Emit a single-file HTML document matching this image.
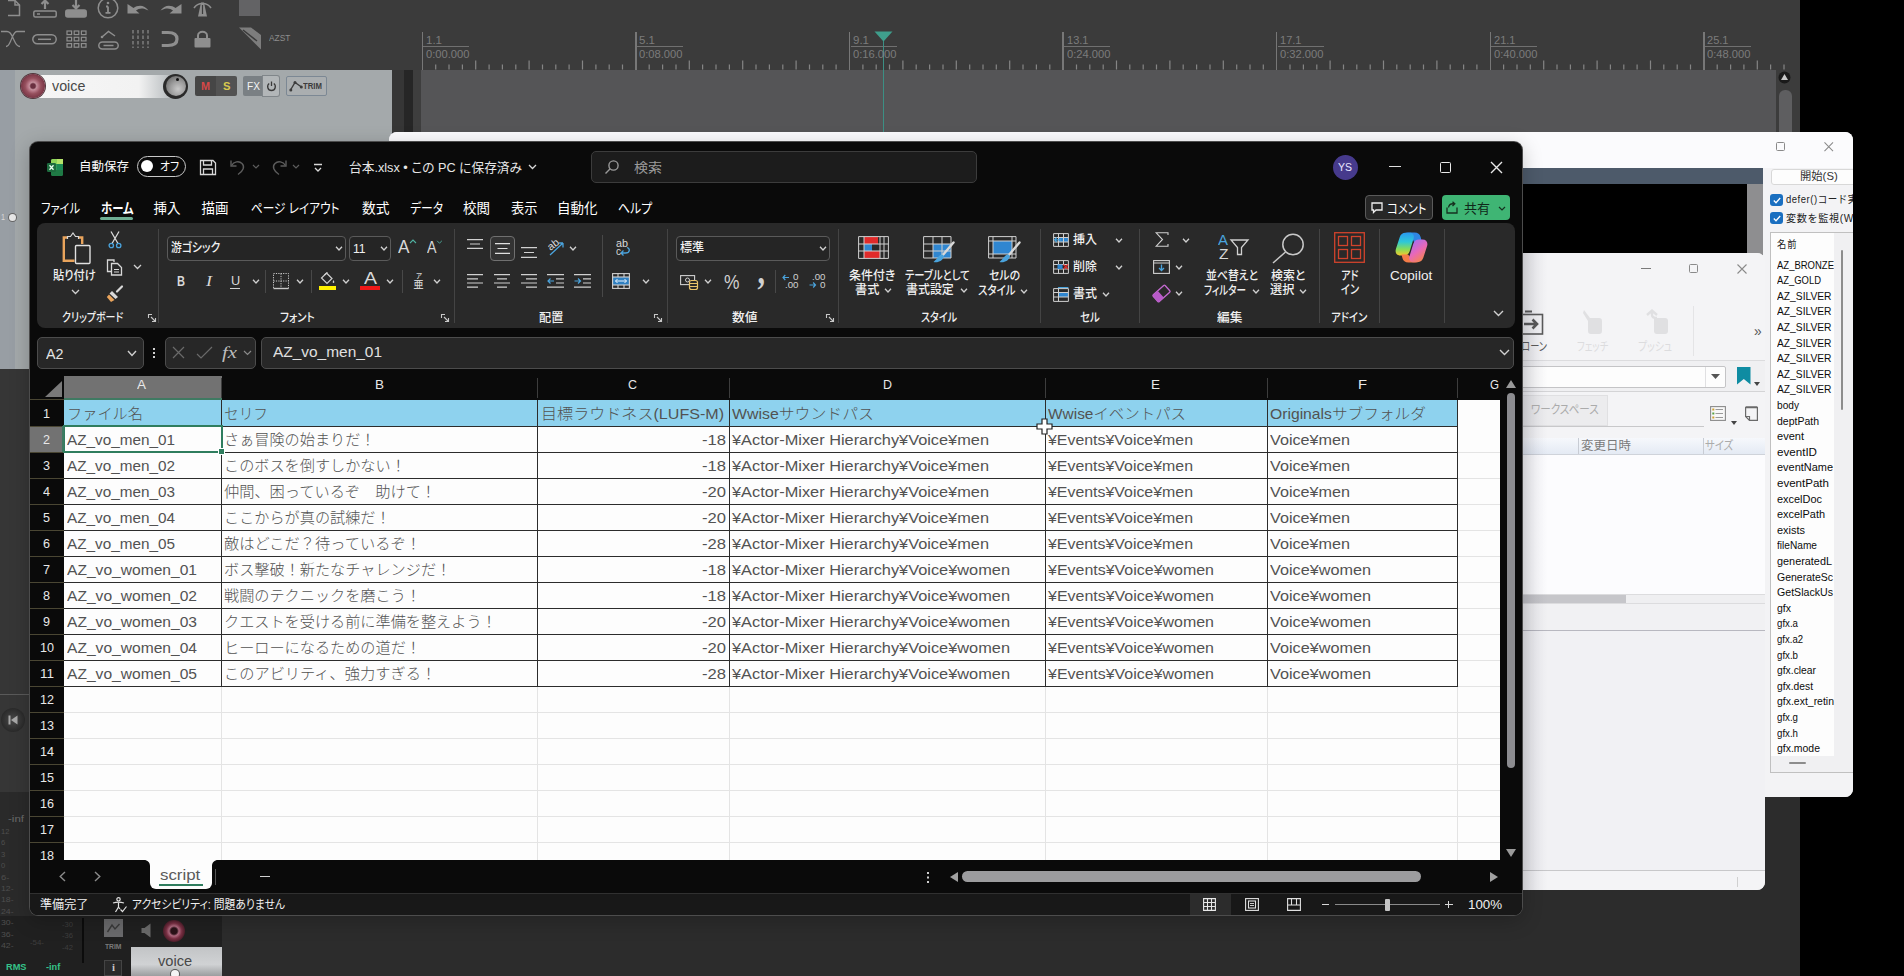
<!DOCTYPE html>
<html lang="ja">
<head>
<meta charset="utf-8">
<title>台本.xlsx</title>
<style>
*{box-sizing:border-box;margin:0;padding:0}
html,body{width:1904px;height:976px;overflow:hidden;background:#2c2c2c}
body{position:relative;font-family:"Liberation Sans","Noto Sans CJK JP",sans-serif;font-size:12px;color:#ddd}
.a{position:absolute}
.t{position:absolute;white-space:pre;line-height:1}
svg{position:absolute;overflow:visible}
.o{position:absolute;left:0;top:0}
/* DAW */
#daw-top{left:0;top:0;width:420px;height:69px;background:#3b3b3b}
#ruler{left:420px;top:0;width:1380px;height:69px;background:#404040}
#arr{left:420px;top:69px;width:1380px;height:727px;background:#565656}
#tcp{left:14px;top:70px;width:378px;height:299px;background:#a3a8aa}
#tcpl{left:0;top:70px;width:14px;height:299px;background:#90969a}
#gap{left:392px;top:69px;width:28px;height:300px;background:#3a3a3a}
#rblack{left:1800px;top:0;width:104px;height:976px;background:#000}
/* windows */
#ide{left:389px;top:132px;width:1464px;height:665px;background:#f6f6f8;border-radius:8px;overflow:hidden}
#ide>.o{left:-389px;top:-132px}
#git{left:1500px;top:253px;width:265px;height:637px;background:#f3f3f5;border-radius:0 8px 8px 0;overflow:hidden}
#git>.o{left:-1500px;top:-253px}
/* excel */
#xl{left:30px;top:142px;width:1492px;height:773px;background:#0a0a0a;border-radius:8px;overflow:hidden}
#xl>.o{left:-30px;top:-142px}
#xlb{left:29px;top:141px;width:1494px;height:775px;border-radius:9px;background:#4c4c4c;box-shadow:0 5px 20px rgba(0,0,0,.22)}
</style>
</head>
<body>
<!-- ===== DAW background ===== -->
<div class="a" id="daw-top"></div>
<div class="a" id="ruler"></div>
<div class="a" id="arr"></div>
<div class="a" id="gap"></div>
<div class="a" id="tcpl"></div>
<div class="a" id="tcp"></div>
<div class="a" id="rblack"></div>
<div class="a" style="left:0;top:0;width:1800px;height:69.5px;background:#3b3b3b"></div>
<div class="a" style="left:421px;top:69.5px;width:1355px;height:730px;background:#555557"></div>
<div class="a" style="left:1776px;top:69.5px;width:24px;height:730px;background:#3c3c3c"></div>
<div class="a" style="left:392px;top:69.5px;width:12px;height:300px;background:#363636"></div><div class="a" style="left:404px;top:69.5px;width:9px;height:300px;background:#262626"></div>
<div class="a" style="left:413px;top:69.5px;width:8px;height:300px;background:#3e3e3e"></div>
<div class="a" style="left:0;top:69.5px;width:15px;height:300px;background:#989ea4"></div>
<div class="a" style="left:15px;top:69.5px;width:377px;height:300px;background:#a4a9ab"></div>
<div class="a" style="left:0;top:369px;width:421px;height:607px;background:#363636"></div>
<div class="a" style="left:0;top:694px;width:30px;height:1px;background:#5a5a5a"></div>
<div class="a" style="left:0;top:792px;width:421px;height:184px;background:#2a2a2a"></div>
<div class="a" style="left:0;top:916px;width:222px;height:60px;background:#202020"></div>
<div class="a" style="left:222px;top:796px;width:1578px;height:180px;background:#2c2c2c"></div>
<div class="a" style="left:421.6px;top:32px;width:1.4px;height:37.5px;background:#777"></div>
<div class="a" style="left:423.3px;top:46px;width:46px;height:1px;background:#707070"></div>
<div class="a" style="left:635.2px;top:32px;width:1.4px;height:37.5px;background:#777"></div>
<div class="a" style="left:636.9px;top:46px;width:46px;height:1px;background:#707070"></div>
<div class="a" style="left:848.8px;top:32px;width:1.4px;height:37.5px;background:#777"></div>
<div class="a" style="left:850.5px;top:46px;width:46px;height:1px;background:#707070"></div>
<div class="a" style="left:1062.4px;top:32px;width:1.4px;height:37.5px;background:#777"></div>
<div class="a" style="left:1064.1px;top:46px;width:46px;height:1px;background:#707070"></div>
<div class="a" style="left:1276.0px;top:32px;width:1.4px;height:37.5px;background:#777"></div>
<div class="a" style="left:1277.7px;top:46px;width:46px;height:1px;background:#707070"></div>
<div class="a" style="left:1489.6px;top:32px;width:1.4px;height:37.5px;background:#777"></div>
<div class="a" style="left:1491.3px;top:46px;width:46px;height:1px;background:#707070"></div>
<div class="a" style="left:1703.2px;top:32px;width:1.4px;height:37.5px;background:#777"></div>
<div class="a" style="left:1704.9px;top:46px;width:46px;height:1px;background:#707070"></div>
<svg style="left:0;top:0" width="1800" height="70"><path d="M435.7 64.5V69.5M449.0 64.5V69.5M462.4 64.5V69.5M475.7 60.5V69.5M489.1 64.5V69.5M502.4 64.5V69.5M515.8 64.5V69.5M529.1 60.5V69.5M542.5 64.5V69.5M555.8 64.5V69.5M569.1 64.5V69.5M582.5 60.5V69.5M595.9 64.5V69.5M609.2 64.5V69.5M622.5 64.5V69.5M649.2 64.5V69.5M662.6 64.5V69.5M676.0 64.5V69.5M689.3 60.5V69.5M702.6 64.5V69.5M716.0 64.5V69.5M729.4 64.5V69.5M742.7 60.5V69.5M756.0 64.5V69.5M769.4 64.5V69.5M782.8 64.5V69.5M796.1 60.5V69.5M809.5 64.5V69.5M822.8 64.5V69.5M836.1 64.5V69.5M862.9 64.5V69.5M876.2 64.5V69.5M889.5 64.5V69.5M902.9 60.5V69.5M916.2 64.5V69.5M929.6 64.5V69.5M943.0 64.5V69.5M956.3 60.5V69.5M969.7 64.5V69.5M983.0 64.5V69.5M996.3 64.5V69.5M1009.7 60.5V69.5M1023.0 64.5V69.5M1036.4 64.5V69.5M1049.8 64.5V69.5M1076.5 64.5V69.5M1089.8 64.5V69.5M1103.2 64.5V69.5M1116.5 60.5V69.5M1129.8 64.5V69.5M1143.2 64.5V69.5M1156.5 64.5V69.5M1169.9 60.5V69.5M1183.2 64.5V69.5M1196.6 64.5V69.5M1210.0 64.5V69.5M1223.3 60.5V69.5M1236.7 64.5V69.5M1250.0 64.5V69.5M1263.3 64.5V69.5M1290.0 64.5V69.5M1303.4 64.5V69.5M1316.8 64.5V69.5M1330.1 60.5V69.5M1343.5 64.5V69.5M1356.8 64.5V69.5M1370.2 64.5V69.5M1383.5 60.5V69.5M1396.8 64.5V69.5M1410.2 64.5V69.5M1423.5 64.5V69.5M1436.9 60.5V69.5M1450.2 64.5V69.5M1463.6 64.5V69.5M1476.9 64.5V69.5M1503.6 64.5V69.5M1517.0 64.5V69.5M1530.3 64.5V69.5M1543.7 60.5V69.5M1557.0 64.5V69.5M1570.4 64.5V69.5M1583.8 64.5V69.5M1597.1 60.5V69.5M1610.4 64.5V69.5M1623.8 64.5V69.5M1637.1 64.5V69.5M1650.5 60.5V69.5M1663.8 64.5V69.5M1677.2 64.5V69.5M1690.5 64.5V69.5M1717.2 64.5V69.5M1730.6 64.5V69.5M1743.9 64.5V69.5M1757.3 60.5V69.5M1770.6 64.5V69.5M1784.0 64.5V69.5" stroke="#858585" stroke-width="1.2" fill="none"/></svg>
<svg style="left:874px;top:31px" width="19" height="11" viewBox="0 0 19 11"><path d="M0.5 0.5H18.5L9.5 10.5Z" fill="#3f9e8c"/></svg>
<div class="a" style="left:882.6px;top:41px;width:1.4px;height:92px;background:#3c8f84"></div>
<div class="a" style="left:1779px;top:90px;width:12.5px;height:60px;background:#5e5e60;border-radius:6px 6px 0 0"></div>
<svg style="left:1778px;top:71px" width="13" height="13" viewBox="0 0 13 13"><circle cx="6.5" cy="6.5" r="6" fill="#1a1a1a"/><path d="M6.5 3L10 9H3Z" fill="#c8c8c8"/></svg>
<svg style="left:6px;top:0px" width="16" height="17" viewBox="0 0 16 17" fill="none" stroke="#8e8e8e" stroke-width="1.5" ><path d="M2 0.5H9L13.5 5V15.5H2"/><path d="M9 0.5V5H13.5"/></svg>
<svg style="left:33px;top:0px" width="24" height="18" viewBox="0 0 24 18" fill="none" stroke="#8e8e8e" stroke-width="1.5" ><rect x="0.8" y="11" width="22.4" height="6" rx="1.5"/><path d="M12 9V1M8.5 4L12 0.5L15.5 4" stroke-width="2.2"/><path d="M4 14H7" /></svg>
<svg style="left:65px;top:0px" width="22" height="18" viewBox="0 0 22 18" fill="none" stroke="#8e8e8e" stroke-width="1.5" ><rect x="0.8" y="10" width="20.4" height="7" rx="2" fill="#8e8e8e"/><path d="M11 0V8M7.5 5L11 8.5L14.5 5" stroke-width="2.2"/></svg>
<svg style="left:97px;top:-3px" width="22" height="22" viewBox="0 0 22 22" fill="none" stroke="#8e8e8e" stroke-width="1.5" ><circle cx="11" cy="11" r="9.8"/><path d="M11 9.5V15.5M8.5 15.8H13.5M9 9.5H11" stroke-width="1.8"/><circle cx="11" cy="6" r="1.3" fill="#8e8e8e" stroke="none"/></svg>
<svg style="left:127px;top:3px" width="22" height="11" viewBox="0 0 22 11" fill="#8e8e8e"><path d="M0.5 10.5V1L6.5 5C11 1.5 17.5 1.5 21.5 7.5C16 4.5 12 5 9 7.5L12.5 10.5Z"/></svg>
<svg style="left:160px;top:3px" width="22" height="11" viewBox="0 0 22 11" fill="#8e8e8e"><path d="M21.5 10.5V1L15.5 5C11 1.5 4.5 1.5 0.5 7.5C6 4.5 10 5 13 7.5L9.5 10.5Z"/></svg>
<svg style="left:193px;top:0px" width="19" height="18" viewBox="0 0 19 18" fill="none" stroke="#8e8e8e" stroke-width="1.5" ><path d="M5 16.5L8 2.5H11L14 16.5Z" fill="#8e8e8e" stroke="none"/><path d="M1 8C5 2 14 2 18 8" stroke-width="1.6"/><path d="M9.5 5V14" stroke="#3b3b3b" stroke-width="1.2"/></svg>
<div class="a" style="left:239px;top:0;width:21px;height:16px;background:#636365"></div>
<svg style="left:1px;top:30px" width="25" height="18" viewBox="0 0 25 18" fill="none" stroke="#8e8e8e" stroke-width="1.5" ><path d="M0 1.5H6C10 1.5 11 6 12.5 9C14 12 15 16.5 19 16.5M24 1.5H16C13 1.5 12 6 10.5 9C9 12 8 16.5 5 16.5" stroke-width="1.3"/></svg>
<svg style="left:32px;top:34px" width="25" height="11" viewBox="0 0 25 11" fill="none" stroke="#8e8e8e" stroke-width="1.5" ><rect x="0.8" y="0.8" width="23.4" height="9" rx="4.5"/><path d="M6 5.3H19"/></svg>
<svg style="left:66px;top:30px" width="21" height="18" viewBox="0 0 21 18" fill="none" stroke="#8e8e8e" stroke-width="1.5" ><rect x="1.0" y="1.0" width="4.6" height="3.6" stroke-width="1.2"/><rect x="8.2" y="1.0" width="4.6" height="3.6" stroke-width="1.2"/><rect x="15.4" y="1.0" width="4.6" height="3.6" stroke-width="1.2"/><rect x="1.0" y="7.3" width="4.6" height="3.6" stroke-width="1.2"/><rect x="8.2" y="7.3" width="4.6" height="3.6" stroke-width="1.2"/><rect x="15.4" y="7.3" width="4.6" height="3.6" stroke-width="1.2"/><rect x="1.0" y="13.6" width="4.6" height="3.6" stroke-width="1.2"/><rect x="8.2" y="13.6" width="4.6" height="3.6" stroke-width="1.2"/><rect x="15.4" y="13.6" width="4.6" height="3.6" stroke-width="1.2"/></svg>
<svg style="left:98px;top:30px" width="21" height="20" viewBox="0 0 21 20" fill="none" stroke="#8e8e8e" stroke-width="1.5" ><path d="M4 7L10.5 1.5L17 6"/><circle cx="4" cy="7" r="1.3" fill="#8e8e8e" stroke="none"/><rect x="0.8" y="12" width="19.4" height="7" rx="3.5"/><path d="M5.5 15.5H15.5"/></svg>
<svg style="left:131px;top:30px" width="18" height="18" viewBox="0 0 18 18" fill="none" stroke="#8e8e8e" stroke-width="1.5" ><path d="M2 0V18M7 0V18M12 0V18M17 0V18" stroke-dasharray="3.5 2" stroke-width="1.2"/></svg>
<svg style="left:160px;top:30px" width="20" height="18" viewBox="0 0 20 18" fill="none" stroke="#8e8e8e" stroke-width="1.5" ><path d="M1 2.5H8C14 2.5 17 5 17 9C17 13 14 15.5 8 15.5H1" stroke-width="3.2"/><path d="M1 0.5V4.5M1 13.5V17.5" stroke="#3b3b3b" stroke-width="1.5"/></svg>
<svg style="left:194px;top:30px" width="17" height="18" viewBox="0 0 17 18" fill="none" stroke="#8e8e8e" stroke-width="1.5" ><rect x="0.5" y="8" width="16" height="9.5" rx="1" fill="#8e8e8e" stroke="none"/><path d="M4 8V5.5C4 0.5 13 0.5 13 5.5V8" stroke-width="2"/></svg>
<svg style="left:238px;top:27px" width="24" height="23" viewBox="0 0 24 23" fill="none" stroke="#8e8e8e" stroke-width="1.5" ><path d="M1 0.5H13L23 8V22.5Z" fill="#8e8e8e" stroke="none" opacity=".8"/><path d="M5 3L19 14" stroke="#3b3b3b" stroke-width="1.5"/></svg>
<div class="a" style="left:38px;top:74.5px;width:140px;height:23px;background:linear-gradient(90deg,#f6f6f6 0,#f2f2f2 72%,#c4c8ca 90%,#a4a9ab 100%)"></div>
<div class="a" style="left:20.5px;top:74px;width:24px;height:24px;border-radius:12px;background:radial-gradient(circle,#6a3040 0,#6a3040 13%,#c4909c 22%,#b87888 30%,#96505e 46%,#7a3646 70%,#5e2634 100%);box-shadow:0 0 0 1px #50343a"></div>
<div class="a" style="left:163px;top:73.5px;width:25px;height:25px;border-radius:12.5px;background:#2a2a2a"></div><div class="a" style="left:165.5px;top:76px;width:20px;height:20px;border-radius:10px;background:radial-gradient(circle at 60% 65%,#c8c8c8 0,#a0a0a0 40%,#707070 80%,#5a5a5a 100%)"></div>
<div class="a" style="left:176px;top:77.5px;width:3px;height:3px;border-radius:2px;background:#111"></div>
<div class="a" style="left:195px;top:76px;width:21px;height:20px;background:#464646;border-radius:2px 0 0 2px"></div>
<div class="a" style="left:216px;top:76px;width:20.5px;height:20px;background:#525252;border-radius:0 2px 2px 0"></div>
<div class="a" style="left:243px;top:76px;width:20px;height:20px;background:#7a8084;border-radius:2px 0 0 2px"></div>
<div class="a" style="left:263px;top:76px;width:15.5px;height:20px;background:#b2b6b8;border-radius:0 2px 2px 0;box-shadow:0 0 0 1px #80868a"></div>
<svg style="left:265.5px;top:80.5px" width="11" height="11" viewBox="0 0 11 11" fill="none" stroke="#3a3a3a" stroke-width="1.3"><path d="M3.2 2.5C0.5 4.5 1.5 9.5 5.5 9.5C9.5 9.5 10.5 4.5 7.8 2.5M5.5 0.5V5"/></svg>
<div class="a" style="left:285.5px;top:76px;width:41px;height:20px;background:#aaaeb0;border:1px solid #7c8894;border-radius:2px"></div>
<svg style="left:289px;top:80px" width="14" height="12" viewBox="0 0 14 12" fill="none" stroke="#3c3c3c" stroke-width="1.4"><path d="M1.5 10L6 2.5L12.5 7"/><circle cx="1.8" cy="10" r="1.5" fill="#3c3c3c" stroke="none"/><circle cx="6" cy="2.5" r="1.5" fill="#3c3c3c" stroke="none"/><circle cx="12.3" cy="7" r="1.5" fill="#3c3c3c" stroke="none"/></svg>
<div class="a" style="left:9px;top:213.5px;width:7px;height:7px;border-radius:4px;background:#e8e8e8;box-shadow:0 0 0 1px #666"></div>
<div class="a" style="left:1px;top:708px;width:24px;height:24px;border-radius:12px;background:radial-gradient(circle,#4a4a4a 0,#2a2a2a 70%,#1a1a1a 100%)"></div>
<svg style="left:8px;top:715px" width="10" height="10" viewBox="0 0 10 10" fill="#a8a8a8"><rect x="0.5" y="0.5" width="2" height="9"/><path d="M9.5 0.5V9.5L3 5Z"/></svg>
<div class="a" style="left:82px;top:918px;width:1.6px;height:45px;background:#0c0c0c"></div>
<div class="a" style="left:104px;top:919px;width:19px;height:18px;background:#6a6a6c"></div>
<svg style="left:106px;top:922px" width="15" height="12" viewBox="0 0 15 12" fill="none" stroke="#3a3a3a" stroke-width="1.4"><path d="M1.5 10L6 3L9 7L13.5 2"/></svg>
<div class="a" style="left:104px;top:960px;width:18px;height:16px;background:#2a2a2a;border:1px solid #444"></div>
<svg style="left:141px;top:923px" width="10" height="15" viewBox="0 0 10 15"><path d="M9.5 0.5V14.5L3.5 10H0.5V5H3.5Z" fill="#6a6a6a"/></svg>
<div class="a" style="left:163px;top:920px;width:22px;height:22px;border-radius:11px;background:radial-gradient(circle,#2a1218 0,#2a1218 20%,#b06a80 32%,#7a3044 50%,#4a1c28 72%,#2a2022 100%)"></div>
<div class="a" style="left:130.5px;top:947px;width:91.5px;height:29px;background:linear-gradient(#c2c4c6 0,#d0d2d4 60%,#9c9ea0 100%)"></div>
<div class="a" style="left:171px;top:970px;width:8px;height:8px;border-radius:4px;background:#f4f4f4;box-shadow:0 0 0 1px #555"></div>
<span class="t" style="left:425.8px;top:35.0px;font-size:10.5px;color:#7c7c7c;transform:scaleX(1.0952);transform-origin:0 50%;">1.1</span>
<span class="t" style="left:425.8px;top:48.8px;font-size:10.5px;color:#7c7c7c;transform:scaleX(1.0642);transform-origin:0 50%;">0:00.000</span>
<span class="t" style="left:639.4px;top:35.0px;font-size:10.5px;color:#7c7c7c;transform:scaleX(1.0952);transform-origin:0 50%;">5.1</span>
<span class="t" style="left:639.4px;top:48.8px;font-size:10.5px;color:#7c7c7c;transform:scaleX(1.0642);transform-origin:0 50%;">0:08.000</span>
<span class="t" style="left:853.0px;top:35.0px;font-size:10.5px;color:#7c7c7c;transform:scaleX(1.0952);transform-origin:0 50%;">9.1</span>
<span class="t" style="left:853.0px;top:48.8px;font-size:10.5px;color:#7c7c7c;transform:scaleX(1.0642);transform-origin:0 50%;">0:16.000</span>
<span class="t" style="left:1066.6px;top:35.0px;font-size:10.5px;color:#7c7c7c;transform:scaleX(1.0520);transform-origin:0 50%;">13.1</span>
<span class="t" style="left:1066.6px;top:48.8px;font-size:10.5px;color:#7c7c7c;transform:scaleX(1.0642);transform-origin:0 50%;">0:24.000</span>
<span class="t" style="left:1280.2px;top:35.0px;font-size:10.5px;color:#7c7c7c;transform:scaleX(1.0520);transform-origin:0 50%;">17.1</span>
<span class="t" style="left:1280.2px;top:48.8px;font-size:10.5px;color:#7c7c7c;transform:scaleX(1.0642);transform-origin:0 50%;">0:32.000</span>
<span class="t" style="left:1493.8px;top:35.0px;font-size:10.5px;color:#7c7c7c;transform:scaleX(1.0520);transform-origin:0 50%;">21.1</span>
<span class="t" style="left:1493.8px;top:48.8px;font-size:10.5px;color:#7c7c7c;transform:scaleX(1.0642);transform-origin:0 50%;">0:40.000</span>
<span class="t" style="left:1707.4px;top:35.0px;font-size:10.5px;color:#7c7c7c;transform:scaleX(1.0520);transform-origin:0 50%;">25.1</span>
<span class="t" style="left:1707.4px;top:48.8px;font-size:10.5px;color:#7c7c7c;transform:scaleX(1.0642);transform-origin:0 50%;">0:48.000</span>
<span class="t" style="left:269.4px;top:34.3px;font-size:9px;color:#8e8e8e;transform:scaleX(0.9255);transform-origin:0 50%;">AZST</span>
<span class="t" style="left:52.4px;top:78.0px;font-size:15px;color:#484848;transform:scaleX(0.9534);transform-origin:0 50%;">voice</span>
<span class="t" style="left:201.0px;top:80.8px;font-size:11px;color:#d64848;font-weight:700;transform:scaleX(0.9813);transform-origin:0 50%;">M</span>
<span class="t" style="left:222.5px;top:80.8px;font-size:11px;color:#d8c84e;font-weight:700;transform:scaleX(1.0213);transform-origin:0 50%;">S</span>
<span class="t" style="left:246.5px;top:80.8px;font-size:11px;color:#f4f4f4;transform:scaleX(0.9244);transform-origin:0 50%;">FX</span>
<span class="t" style="left:303.0px;top:81.8px;font-size:9px;color:#3c3c3c;font-weight:700;transform:scaleX(0.8636);transform-origin:0 50%;">TRIM</span>
<span class="t" style="left:1.0px;top:212.5px;font-size:9px;color:#d8d8d8;transform:scaleX(0.7975);transform-origin:0 50%;">1</span>
<span class="t" style="left:157.7px;top:952.5px;font-size:15px;color:#484848;transform:scaleX(0.9763);transform-origin:0 50%;">voice</span>
<span class="t" style="left:105.0px;top:942.5px;font-size:8px;color:#7a7a7a;font-weight:700;transform:scaleX(0.8435);transform-origin:0 50%;">TRIM</span>
<span class="t" style="left:111.5px;top:962.0px;font-size:11px;color:#c8c8c8;font-weight:700;font-family:'Liberation Serif',serif;transform:scaleX(0.9796);transform-origin:0 50%;">i</span>
<span class="t" style="left:5.5px;top:962.2px;font-size:9.5px;color:#35c48a;font-weight:700;transform:scaleX(0.9704);transform-origin:0 50%;">RMS</span>
<span class="t" style="left:45.7px;top:962.2px;font-size:9.5px;color:#35c48a;font-weight:700;transform:scaleX(0.9674);transform-origin:0 50%;">-inf</span>
<span class="t" style="left:8.0px;top:815.0px;font-size:9px;color:#6a6a6a;transform:scaleX(1.2784);transform-origin:0 50%;">-inf</span>
<span class="t" style="left:1.0px;top:828.0px;font-size:8px;color:#4e4e4e;transform:scaleX(0.9432);transform-origin:0 50%;">12</span>
<span class="t" style="left:1.0px;top:839.4px;font-size:8px;color:#4e4e4e;transform:scaleX(0.9432);transform-origin:0 50%;">6</span>
<span class="t" style="left:1.0px;top:850.8px;font-size:8px;color:#4e4e4e;transform:scaleX(0.9432);transform-origin:0 50%;">3</span>
<span class="t" style="left:1.0px;top:862.2px;font-size:8px;color:#4e4e4e;transform:scaleX(0.9432);transform-origin:0 50%;">0</span>
<span class="t" style="left:1.0px;top:873.6px;font-size:8px;color:#4e4e4e;transform:scaleX(1.1789);transform-origin:0 50%;">6-</span>
<span class="t" style="left:1.0px;top:885.0px;font-size:8px;color:#4e4e4e;transform:scaleX(1.0897);transform-origin:0 50%;">12-</span>
<span class="t" style="left:1.0px;top:896.4px;font-size:8px;color:#4e4e4e;transform:scaleX(1.0897);transform-origin:0 50%;">18-</span>
<span class="t" style="left:1.0px;top:907.8px;font-size:8px;color:#4e4e4e;transform:scaleX(1.0897);transform-origin:0 50%;">24-</span>
<span class="t" style="left:1.0px;top:919.2px;font-size:8px;color:#4e4e4e;transform:scaleX(1.0897);transform-origin:0 50%;">30-</span>
<span class="t" style="left:1.0px;top:930.6px;font-size:8px;color:#4e4e4e;transform:scaleX(1.0897);transform-origin:0 50%;">36-</span>
<span class="t" style="left:1.0px;top:942.0px;font-size:8px;color:#4e4e4e;transform:scaleX(1.0897);transform-origin:0 50%;">42-</span>
<span class="t" style="left:62.0px;top:921.0px;font-size:8px;color:#3e3e3e;transform:scaleX(0.9514);transform-origin:0 50%;">-30</span>
<span class="t" style="left:62.0px;top:932.4px;font-size:8px;color:#3e3e3e;transform:scaleX(0.9514);transform-origin:0 50%;">-36</span>
<span class="t" style="left:62.0px;top:943.8px;font-size:8px;color:#3e3e3e;transform:scaleX(0.9514);transform-origin:0 50%;">-42</span>
<span class="t" style="left:30.0px;top:939.0px;font-size:8px;color:#3e3e3e;transform:scaleX(0.9835);transform-origin:0 50%;">-54-</span>
<!-- ===== IDE window (behind) ===== -->
<div class="a" id="ide"><div class="o">
<!-- IDE window contents -->
<div class="a" style="left:389px;top:132px;width:1464px;height:36px;background:#fbfbfd"></div>
<svg style="left:399px;top:137px" width="12" height="12" viewBox="0 0 12 12" fill="none"><path d="M1.5 11C1.5 5 10.5 5 10.5 11" stroke="#2a86c8" stroke-width="2"/></svg>
<div class="a" style="left:1776px;top:142px;width:9px;height:9px;border:1px solid #8a8a8a;border-radius:1.5px"></div>
<svg style="left:1824px;top:142px" width="9.5" height="9.5" viewBox="0 0 10 10" stroke="#8a8a8a" stroke-width="1.1"><path d="M0.5 0.5L9.5 9.5M9.5 0.5L0.5 9.5"/></svg>
<div class="a" style="left:389px;top:167.5px;width:1374px;height:16.5px;background:#4d5a6a"></div>
<div class="a" style="left:389px;top:184px;width:1358px;height:600px;background:#000"></div>
<div class="a" style="left:1746.5px;top:184px;width:16.5px;height:600px;background:#8e8e90"></div>
<div class="a" style="left:1763px;top:167.5px;width:90px;height:630px;background:#f3f3f5"></div>
<!-- start button -->
<div class="a" style="left:1771px;top:169px;width:90px;height:16px;background:#fdfdfd;border:1px solid #d8d8d8;border-radius:3px"></div>
<!-- checkboxes -->
<div class="a" style="left:1770.3px;top:193.6px;width:12.6px;height:12.2px;background:#1a6fc0;border-radius:3px"></div>
<svg style="left:1772.5px;top:196.5px" width="8" height="7" viewBox="0 0 8 7" fill="none" stroke="#fff" stroke-width="1.3"><path d="M0.8 3.5L3 5.8L7.2 1"/></svg>
<div class="a" style="left:1770.3px;top:212.1px;width:12.6px;height:12.2px;background:#1a6fc0;border-radius:3px"></div>
<svg style="left:1772.5px;top:215px" width="8" height="7" viewBox="0 0 8 7" fill="none" stroke="#fff" stroke-width="1.3"><path d="M0.8 3.5L3 5.8L7.2 1"/></svg>
<!-- list box -->
<div class="a" style="left:1769.5px;top:231.5px;width:84px;height:541px;background:#fdfdfd;border:1px solid #c0c0c0"></div>
<div class="a" style="left:1770.5px;top:756px;width:64px;height:15.5px;background:#f0f0f2"></div>
<div class="a" style="left:1789px;top:761.5px;width:17px;height:2px;background:#8c8c8c;border-radius:1px"></div>

<span class="t" style="left:1799.8px;top:171.3px;font-size:11px;color:#333;transform:scaleX(1.0280);transform-origin:0 50%;">開始(S)</span>
<span class="t" style="left:1786.2px;top:194.4px;font-size:10.5px;color:#222;letter-spacing:0.6px;transform:scaleX(0.9025);transform-origin:0 50%;">defer()コード実行</span>
<span class="t" style="left:1786.2px;top:212.9px;font-size:10.5px;color:#222;letter-spacing:0.6px;transform:scaleX(0.9674);transform-origin:0 50%;">変数を監視(W)</span>
<span class="t" style="left:1777.4px;top:238.8px;font-size:10.5px;color:#222;letter-spacing:1px;transform:scaleX(0.8826);transform-origin:0 50%;">名前</span>
<span class="t" style="left:1777.4px;top:259.6px;font-size:10.5px;color:#0c0c0c;transform:scaleX(0.9045);transform-origin:0 50%;">AZ_BRONZE</span>
<span class="t" style="left:1777.4px;top:275.2px;font-size:10.5px;color:#0c0c0c;transform:scaleX(0.8977);transform-origin:0 50%;">AZ_GOLD</span>
<span class="t" style="left:1777.4px;top:290.8px;font-size:10.5px;color:#0c0c0c;transform:scaleX(0.9762);transform-origin:0 50%;">AZ_SILVER</span>
<span class="t" style="left:1777.4px;top:306.4px;font-size:10.5px;color:#0c0c0c;transform:scaleX(0.9762);transform-origin:0 50%;">AZ_SILVER</span>
<span class="t" style="left:1777.4px;top:321.9px;font-size:10.5px;color:#0c0c0c;transform:scaleX(0.9762);transform-origin:0 50%;">AZ_SILVER</span>
<span class="t" style="left:1777.4px;top:337.6px;font-size:10.5px;color:#0c0c0c;transform:scaleX(0.9762);transform-origin:0 50%;">AZ_SILVER</span>
<span class="t" style="left:1777.4px;top:353.1px;font-size:10.5px;color:#0c0c0c;transform:scaleX(0.9762);transform-origin:0 50%;">AZ_SILVER</span>
<span class="t" style="left:1777.4px;top:368.8px;font-size:10.5px;color:#0c0c0c;transform:scaleX(0.9762);transform-origin:0 50%;">AZ_SILVER</span>
<span class="t" style="left:1777.4px;top:384.4px;font-size:10.5px;color:#0c0c0c;transform:scaleX(0.9762);transform-origin:0 50%;">AZ_SILVER</span>
<span class="t" style="left:1777.4px;top:400.0px;font-size:10.5px;color:#0c0c0c;transform:scaleX(0.9657);transform-origin:0 50%;">body</span>
<span class="t" style="left:1777.4px;top:415.6px;font-size:10.5px;color:#0c0c0c;transform:scaleX(0.9989);transform-origin:0 50%;">deptPath</span>
<span class="t" style="left:1777.4px;top:431.1px;font-size:10.5px;color:#0c0c0c;transform:scaleX(1.0511);transform-origin:0 50%;">event</span>
<span class="t" style="left:1777.4px;top:446.8px;font-size:10.5px;color:#0c0c0c;transform:scaleX(1.1054);transform-origin:0 50%;">eventID</span>
<span class="t" style="left:1777.4px;top:462.4px;font-size:10.5px;color:#0c0c0c;transform:scaleX(1.0428);transform-origin:0 50%;">eventName</span>
<span class="t" style="left:1777.4px;top:478.0px;font-size:10.5px;color:#0c0c0c;transform:scaleX(1.0994);transform-origin:0 50%;">eventPath</span>
<span class="t" style="left:1777.4px;top:493.6px;font-size:10.5px;color:#0c0c0c;transform:scaleX(1.0420);transform-origin:0 50%;">excelDoc</span>
<span class="t" style="left:1777.4px;top:509.1px;font-size:10.5px;color:#0c0c0c;transform:scaleX(1.0407);transform-origin:0 50%;">excelPath</span>
<span class="t" style="left:1777.4px;top:524.8px;font-size:10.5px;color:#0c0c0c;transform:scaleX(1.0431);transform-origin:0 50%;">exists</span>
<span class="t" style="left:1777.4px;top:540.4px;font-size:10.5px;color:#0c0c0c;transform:scaleX(0.9653);transform-origin:0 50%;">fileName</span>
<span class="t" style="left:1777.4px;top:556.0px;font-size:10.5px;color:#0c0c0c;transform:scaleX(1.0350);transform-origin:0 50%;">generatedL</span>
<span class="t" style="left:1777.4px;top:571.5px;font-size:10.5px;color:#0c0c0c;transform:scaleX(0.9992);transform-origin:0 50%;">GenerateSc</span>
<span class="t" style="left:1777.4px;top:587.1px;font-size:10.5px;color:#0c0c0c;transform:scaleX(1.0101);transform-origin:0 50%;">GetSlackUs</span>
<span class="t" style="left:1777.4px;top:602.8px;font-size:10.5px;color:#0c0c0c;transform:scaleX(0.9989);transform-origin:0 50%;">gfx</span>
<span class="t" style="left:1777.4px;top:618.4px;font-size:10.5px;color:#0c0c0c;transform:scaleX(0.9224);transform-origin:0 50%;">gfx.a</span>
<span class="t" style="left:1777.4px;top:634.0px;font-size:10.5px;color:#0c0c0c;transform:scaleX(0.9088);transform-origin:0 50%;">gfx.a2</span>
<span class="t" style="left:1777.4px;top:649.5px;font-size:10.5px;color:#0c0c0c;transform:scaleX(0.9224);transform-origin:0 50%;">gfx.b</span>
<span class="t" style="left:1777.4px;top:665.1px;font-size:10.5px;color:#0c0c0c;transform:scaleX(0.9827);transform-origin:0 50%;">gfx.clear</span>
<span class="t" style="left:1777.4px;top:680.8px;font-size:10.5px;color:#0c0c0c;transform:scaleX(0.9788);transform-origin:0 50%;">gfx.dest</span>
<span class="t" style="left:1777.4px;top:696.4px;font-size:10.5px;color:#0c0c0c;transform:scaleX(0.9964);transform-origin:0 50%;">gfx.ext_retin</span>
<span class="t" style="left:1777.4px;top:712.0px;font-size:10.5px;color:#0c0c0c;transform:scaleX(0.9224);transform-origin:0 50%;">gfx.g</span>
<span class="t" style="left:1777.4px;top:727.5px;font-size:10.5px;color:#0c0c0c;transform:scaleX(0.9224);transform-origin:0 50%;">gfx.h</span>
<span class="t" style="left:1777.4px;top:743.1px;font-size:10.5px;color:#0c0c0c;transform:scaleX(0.9953);transform-origin:0 50%;">gfx.mode</span>
<div class="a" style="left:1834px;top:232.5px;width:19px;height:539px;background:#f0f0f2"></div>
<div class="a" style="left:1840.5px;top:250px;width:2.5px;height:160px;background:#8c8c8c;border-radius:1.5px"></div>

</div></div>
<!-- ===== Git window ===== -->
<div class="a" id="git"><div class="o">
<!-- git client window -->
<div class="a" style="left:1500px;top:253px;width:265px;height:107px;background:#f4f4f6"></div>
<div class="a" style="left:1641px;top:268.3px;width:10px;height:1px;background:#7a7a7a"></div>
<div class="a" style="left:1688.5px;top:263.7px;width:9.5px;height:9px;border:1px solid #8a8a8a;border-radius:1.5px"></div>
<svg style="left:1737.2px;top:263.5px" width="10" height="10" viewBox="0 0 10 10" stroke="#8a8a8a" stroke-width="1.1"><path d="M0.5 0.5L9.5 9.5M9.5 0.5L0.5 9.5"/></svg>
<!-- toolbar -->
<svg style="left:1520px;top:308px" width="24" height="27" viewBox="0 0 24 27" fill="none" stroke="#5a5a5a" stroke-width="1.6">
<rect x="0" y="6.5" width="22.5" height="19.5"/><path d="M4 16H17M12.5 11.5L17 16L12.5 20.5" stroke-width="2.6"/><path d="M5 3.5H12" stroke-width="2.2"/>
</svg>
<svg style="left:1582px;top:310px" width="21" height="24" viewBox="0 0 21 24"><path d="M2 0L8 8H17C19 8 20 9 20 11V21C20 23 19 24 17 24H9C7 24 6 23 6 21V11L1 3Z" fill="#e0e0e2"/></svg>
<svg style="left:1645px;top:310px" width="24" height="24" viewBox="0 0 24 24"><path d="M9 8H20C22 8 23 9 23 11V21C23 23 22 24 20 24H12C10 24 9 23 9 21Z" fill="#e0e0e2"/><path d="M2 5L7 0.5L12 5M7 1V5C7 7 9 8 12 8" stroke="#e0e0e2" stroke-width="2.4" fill="none"/></svg>
<div class="a" style="left:1693px;top:306px;width:1px;height:50px;background:#e4e4e6"></div>
<div class="a" style="left:1500px;top:360px;width:265px;height:1px;background:#dcdcde"></div>
<!-- address row -->
<div class="a" style="left:1500px;top:361px;width:265px;height:30px;background:#f0f0f2"></div>
<div class="a" style="left:1500px;top:366px;width:226px;height:21.5px;background:#fdfdfd;border:1px solid #c4c4c6;border-radius:0 2px 2px 0"></div>
<div class="a" style="left:1704.5px;top:367px;width:1px;height:19.5px;background:#e0e0e2"></div>
<svg style="left:1710.5px;top:373.5px" width="9" height="5" viewBox="0 0 9 5"><path d="M0 0H9L4.5 5Z" fill="#555"/></svg>
<svg style="left:1736.5px;top:367px" width="14" height="18" viewBox="0 0 14 18"><path d="M0 0H13.5V17.5L6.8 12L0 17.5Z" fill="#0f8ca2"/></svg>
<svg style="left:1754px;top:382px" width="6" height="4" viewBox="0 0 6 4"><path d="M0 0H6L3 4Z" fill="#444"/></svg>
<div class="a" style="left:1500px;top:390.5px;width:265px;height:1px;background:#d4d4d6"></div>
<!-- tabs row -->
<div class="a" style="left:1500px;top:391.5px;width:265px;height:46.5px;background:#f4f4f6"></div>
<div class="a" style="left:1500px;top:394.5px;width:108px;height:31px;background:#ececee;border:1px solid #e0e0e2"></div>
<div class="a" style="left:1500px;top:425.5px;width:204px;height:1px;background:#c8c8ca"></div>
<svg style="left:1709.5px;top:406px" width="16" height="15" viewBox="0 0 16 15" fill="none"><rect x="0.6" y="0.6" width="14.8" height="13.8" stroke="#8a8a8a" stroke-width="1.1" fill="#f8f8f8"/><path d="M5.5 3.5H13M5.5 7.5H13M5.5 11.5H13" stroke="#9a9a9a" stroke-width="1"/><rect x="2.3" y="2.5" width="2" height="2" fill="#d0a030"/><rect x="2.3" y="6.5" width="2" height="2" fill="#58a040"/><rect x="2.3" y="10.5" width="2" height="2" fill="#d0a030"/></svg>
<svg style="left:1730.5px;top:420.5px" width="6" height="4" viewBox="0 0 6 4"><path d="M0 0H6L3 4Z" fill="#444"/></svg>
<svg style="left:1744.5px;top:406px" width="13" height="15" viewBox="0 0 13 15" fill="none" stroke="#6a6a6a" stroke-width="1.2"><path d="M0.6 1.5H12.4V14.4H4.5L0.6 10.5Z"/><path d="M0.6 10.5H4.5V14.4"/><path d="M0.6 1.2H12.4" stroke-width="2"/></svg>
<!-- column header -->
<div class="a" style="left:1500px;top:438px;width:265px;height:15.5px;background:linear-gradient(#f6f8fc,#e4eaf4)"></div>
<div class="a" style="left:1578px;top:438px;width:1px;height:15.5px;background:#c8ccd4"></div>
<div class="a" style="left:1702.5px;top:438px;width:1px;height:15.5px;background:#c8ccd4"></div>
<div class="a" style="left:1500px;top:453.5px;width:265px;height:1px;background:#cfd3da"></div>
<!-- list -->
<div class="a" style="left:1500px;top:454.5px;width:265px;height:139.5px;background:#fcfcfe"></div>
<div class="a" style="left:1500px;top:594px;width:265px;height:9.5px;background:#efeff1;border-top:1px solid #dcdcde;border-bottom:1px solid #dcdcde"></div>
<div class="a" style="left:1500px;top:595px;width:126px;height:7.5px;background:#c6c6ca"></div>
<div class="a" style="left:1500px;top:603.5px;width:265px;height:26px;background:#f1f1f3"></div>
<div class="a" style="left:1500px;top:629.5px;width:265px;height:1px;background:#b8b8c0"></div>
<div class="a" style="left:1500px;top:630.5px;width:265px;height:239px;background:#f1f1f4"></div>
<div class="a" style="left:1500px;top:869.5px;width:265px;height:1.5px;background:#c8c8ca"></div>
<div class="a" style="left:1500px;top:871px;width:265px;height:19px;background:#f4f4f6"></div>
<div class="a" style="left:1737px;top:877px;width:1px;height:10px;background:#d0d0d0"></div>
<!-- shadow from excel -->
<div class="a" style="left:1522px;top:253px;width:26px;height:637px;background:linear-gradient(90deg,rgba(60,60,90,.10),rgba(60,60,90,0))"></div>

<span class="t" style="left:1513.0px;top:341.3px;font-size:12px;color:#5a5a5a;font-feature-settings:'palt';transform:scaleX(0.7665);transform-origin:0 50%;">クローン</span>
<span class="t" style="left:1576.8px;top:341.3px;font-size:12px;color:#dcdcde;font-feature-settings:'palt';transform:scaleX(0.7752);transform-origin:0 50%;">フェッチ</span>
<span class="t" style="left:1637.6px;top:341.3px;font-size:12px;color:#dcdcde;font-feature-settings:'palt';transform:scaleX(0.8192);transform-origin:0 50%;">プッシュ</span>
<span class="t" style="left:1753.6px;top:323.5px;font-size:14px;color:#555;transform:scaleX(0.9876);transform-origin:0 50%;">»</span>
<span class="t" style="left:1531.0px;top:403.9px;font-size:12.5px;color:#ababab;font-feature-settings:'palt';transform:scaleX(0.8431);transform-origin:0 50%;">ワークスペース</span>
<span class="t" style="left:1580.5px;top:440.0px;font-size:12px;color:#7a7a7a;transform:scaleX(1.0413);transform-origin:0 50%;">変更日時</span>
<span class="t" style="left:1704.8px;top:440.0px;font-size:12px;color:#ababab;font-feature-settings:'palt';transform:scaleX(0.8640);transform-origin:0 50%;">サイズ</span>
</div></div>
<!-- ===== Excel ===== -->
<div class="a" id="xlb"></div>
<div class="a" id="xl"><div class="o">
<!-- title bar -->
<svg style="left:47px;top:159px" width="16" height="17" viewBox="0 0 16 17">
<rect x="4" y="0" width="12" height="17" rx="1.5" fill="#1f7a45"/>
<rect x="4" y="0" width="12" height="5" rx="1.5" fill="#8fd45a"/>
<rect x="10" y="0" width="6" height="5" fill="#b5e36a"/>
<rect x="4" y="5" width="6" height="6" fill="#2f9a5a"/>
<rect x="10" y="5" width="6" height="6" fill="#1c8a55"/>
<rect x="0" y="4" width="9" height="9" rx="1.2" fill="#1d6b3e"/>
<path d="M2.5 6.2L6.5 10.8M6.5 6.2L2.5 10.8" stroke="#e8fff0" stroke-width="1.3"/>
</svg>
<div class="a" style="left:137px;top:156px;width:49px;height:21px;border:1.5px solid #c8c8c8;border-radius:11px"></div>
<div class="a" style="left:141px;top:160px;width:12px;height:12px;border-radius:6px;background:#fff"></div>
<!-- save -->
<svg style="left:199px;top:159px" width="18" height="17" viewBox="0 0 18 17" fill="none" stroke="#d8d8d8" stroke-width="1.3">
<path d="M1.5 1.5H14L16.5 4V15.5H1.5Z"/><path d="M4.5 1.5V6H12.5V1.5"/><path d="M4.5 15.5V10H13.5V15.5"/>
</svg>
<!-- undo / redo dimmed -->
<svg style="left:229px;top:158px" width="18" height="18" viewBox="0 0 18 18" fill="none" stroke="#5c5c5c" stroke-width="1.4">
<path d="M2 2.5V8H7.5"/><path d="M2.5 7.5C5 3.5 10 2.5 13 5.5C16 8.5 14.5 13 9 16.5"/>
</svg>
<svg style="left:252px;top:164px" width="8" height="5" viewBox="0 0 8 5" fill="none" stroke="#5c5c5c" stroke-width="1.2"><path d="M1 1L4 4L7 1"/></svg>
<svg style="left:270px;top:158px" width="18" height="18" viewBox="0 0 18 18" fill="none" stroke="#5c5c5c" stroke-width="1.4">
<path d="M16 2.5V8H10.5"/><path d="M15.5 7.5C13 3.5 8 2.5 5 5.5C2 8.5 3.5 13 9 16.5"/>
</svg>
<svg style="left:292px;top:164px" width="8" height="5" viewBox="0 0 8 5" fill="none" stroke="#5c5c5c" stroke-width="1.2"><path d="M1 1L4 4L7 1"/></svg>
<svg style="left:313px;top:163px" width="10" height="9" viewBox="0 0 10 9" fill="none" stroke="#d8d8d8" stroke-width="1.3"><path d="M1 1.5H9"/><path d="M2 5L5 8L8 5"/></svg>
<svg style="left:527.5px;top:164px" width="9" height="6" viewBox="0 0 9 6" fill="none" stroke="#d8d8d8" stroke-width="1.3"><path d="M1 1L4.5 4.5L8 1"/></svg>
<!-- search box -->
<div class="a" style="left:591px;top:151px;width:386px;height:32px;background:#1c1c1c;border:1px solid #3c3c3c;border-radius:5px"></div>
<svg style="left:604px;top:159px" width="16" height="16" viewBox="0 0 16 16" fill="none" stroke="#9a9a9a" stroke-width="1.4"><circle cx="9.5" cy="6.5" r="4.6"/><path d="M6.2 9.8L1.5 14.5"/></svg>
<!-- avatar -->
<div class="a" style="left:1333px;top:155px;width:25px;height:25px;border-radius:13px;background:#463a8c"></div>
<!-- window buttons -->
<div class="a" style="left:1389px;top:166.3px;width:12px;height:1.2px;background:#e0e0e0"></div>
<div class="a" style="left:1440px;top:162px;width:11px;height:11px;border:1.5px solid #e8e8e8;border-radius:1.5px"></div>
<svg style="left:1490px;top:161px" width="13" height="13" viewBox="0 0 13 13" stroke="#e8e8e8" stroke-width="1.4"><path d="M1 1L12 12M12 1L1 12"/></svg>
<!-- tab underline -->
<div class="a" style="left:100px;top:217px;width:33px;height:3px;border-radius:1.5px;background:#6fae93"></div>
<!-- comment / share buttons -->
<div class="a" style="left:1365px;top:195px;width:68px;height:25px;background:#272727;border:1px solid #5a5a5a;border-radius:4px"></div>
<svg style="left:1371px;top:202px" width="12" height="12" viewBox="0 0 12 12" fill="none" stroke="#f0f0f0" stroke-width="1.3"><path d="M1 1H11V8H5L2.5 10.5V8H1Z"/></svg>
<div class="a" style="left:1442px;top:195px;width:68px;height:25px;background:#3fb574;border-radius:4px"></div>
<svg style="left:1446px;top:201px" width="12" height="13" viewBox="0 0 12 13" fill="none" stroke="#16301f" stroke-width="1.3"><path d="M1 6.5V12H11V6.5"/><path d="M2.5 6.5C3 3.5 5.5 2.5 8 2.8M6.5 0.8L8.8 2.8L6.5 5"/></svg>
<svg style="left:1498px;top:206px" width="8" height="5" viewBox="0 0 8 5" fill="none" stroke="#16301f" stroke-width="1.2"><path d="M1 1L4 4L7 1"/></svg>
<!-- formula bar -->
<div class="a" style="left:37px;top:337px;width:107px;height:32px;background:#272727;border:1px solid #4c4c4c;border-radius:5px"></div>
<svg style="left:127px;top:350px" width="10" height="7" viewBox="0 0 10 7" fill="none" stroke="#d0d0d0" stroke-width="1.4"><path d="M1 1L5 5.5L9 1"/></svg>
<div class="a" style="left:152.5px;top:348px;width:2px;height:2px;background:#cfcfcf;box-shadow:0 4px 0 #cfcfcf,0 8px 0 #cfcfcf"></div>
<div class="a" style="left:165px;top:337px;width:91px;height:32px;background:#272727;border:1px solid #4c4c4c;border-radius:5px"></div>
<svg style="left:172px;top:346px" width="13" height="13" viewBox="0 0 13 13" stroke="#6a6a6a" stroke-width="1.2"><path d="M1 1L12 12M12 1L1 12"/></svg>
<svg style="left:196px;top:346px" width="17" height="13" viewBox="0 0 17 13" fill="none" stroke="#6a6a6a" stroke-width="1.2"><path d="M1 8L5 12L16 1"/></svg>
<svg style="left:243px;top:350px" width="9" height="6" viewBox="0 0 9 6" fill="none" stroke="#8a8a8a" stroke-width="1.2"><path d="M1 1L4.5 4.5L8 1"/></svg>
<div class="a" style="left:261px;top:337px;width:1253px;height:32px;background:#272727;border:1px solid #4c4c4c;border-radius:5px"></div>
<svg style="left:1499px;top:349px" width="11" height="7" viewBox="0 0 11 7" fill="none" stroke="#d0d0d0" stroke-width="1.4"><path d="M1 1L5.5 5.5L10 1"/></svg>

<span class="t" style="left:79.0px;top:160.8px;font-size:12.5px;color:#fff;transform:scaleX(0.9997);transform-origin:0 50%;">自動保存</span>
<span class="t" style="left:160.0px;top:161.0px;font-size:12px;color:#fff;font-feature-settings:'palt';transform:scaleX(0.9021);transform-origin:0 50%;">オフ</span>
<span class="t" style="left:349.0px;top:160.5px;font-size:13px;color:#e6e6e6;font-feature-settings:'palt';transform:scaleX(0.9770);transform-origin:0 50%;">台本.xlsx • この PC に保存済み</span>
<span class="t" style="left:634.0px;top:160.5px;font-size:13px;color:#9a9a9a;transform:scaleX(1.0763);transform-origin:0 50%;">検索</span>
<span class="t" style="left:1338.0px;top:162.5px;font-size:10px;color:#e8e4ff;transform:scaleX(1.0492);transform-origin:0 50%;">YS</span>
<span class="t" style="left:40.5px;top:202.2px;font-size:13.5px;color:#fff;font-feature-settings:'palt';transform:scaleX(0.8339);transform-origin:0 50%;">ファイル</span>
<span class="t" style="left:100.5px;top:202.2px;font-size:13.5px;color:#fff;font-weight:700;font-feature-settings:'palt';transform:scaleX(0.8435);transform-origin:0 50%;">ホーム</span>
<span class="t" style="left:153.5px;top:202.2px;font-size:13.5px;color:#fff;transform:scaleX(1.0000);transform-origin:0 50%;">挿入</span>
<span class="t" style="left:201.5px;top:202.2px;font-size:13.5px;color:#fff;transform:scaleX(1.0000);transform-origin:0 50%;">描画</span>
<span class="t" style="left:250.5px;top:202.2px;font-size:13.5px;color:#fff;font-feature-settings:'palt';transform:scaleX(0.8622);transform-origin:0 50%;">ページ レイアウト</span>
<span class="t" style="left:362.0px;top:202.2px;font-size:13.5px;color:#fff;transform:scaleX(1.0185);transform-origin:0 50%;">数式</span>
<span class="t" style="left:410.0px;top:202.2px;font-size:13.5px;color:#fff;font-feature-settings:'palt';transform:scaleX(0.8745);transform-origin:0 50%;">データ</span>
<span class="t" style="left:463.0px;top:202.2px;font-size:13.5px;color:#fff;transform:scaleX(1.0000);transform-origin:0 50%;">校閲</span>
<span class="t" style="left:511.0px;top:202.2px;font-size:13.5px;color:#fff;transform:scaleX(0.9815);transform-origin:0 50%;">表示</span>
<span class="t" style="left:557.0px;top:202.2px;font-size:13.5px;color:#fff;transform:scaleX(1.0000);transform-origin:0 50%;">自動化</span>
<span class="t" style="left:617.5px;top:202.2px;font-size:13.5px;color:#fff;font-feature-settings:'palt';transform:scaleX(0.8778);transform-origin:0 50%;">ヘルプ</span>
<span class="t" style="left:1387.0px;top:201.8px;font-size:13px;color:#fff;font-feature-settings:'palt';transform:scaleX(0.8723);transform-origin:0 50%;">コメント</span>
<span class="t" style="left:1464.0px;top:201.8px;font-size:13px;color:#10281a;transform:scaleX(0.9994);transform-origin:0 50%;">共有</span>
<span class="t" style="left:46.0px;top:347.2px;font-size:14.5px;color:#e4e4e4;transform:scaleX(0.9859);transform-origin:0 50%;">A2</span>
<span class="t" style="left:222.0px;top:343.5px;font-size:17px;color:#bdbdbd;font-style:italic;font-family:'Liberation Serif',serif;transform:scaleX(1.2214);transform-origin:0 50%;">fx</span>
<span class="t" style="left:273.0px;top:345.2px;font-size:14.5px;color:#e0e0e0;transform:scaleX(1.0647);transform-origin:0 50%;">AZ_vo_men_01</span>
<!-- ribbon bg -->
<div class="a" style="left:37px;top:223px;width:1478px;height:105px;background:#292929;border-radius:8px"></div>
<!-- group separators -->
<div class="a" style="left:158px;top:229px;width:1px;height:94px;background:#444"></div>
<div class="a" style="left:454px;top:229px;width:1px;height:94px;background:#444"></div>
<div class="a" style="left:667px;top:229px;width:1px;height:94px;background:#444"></div>
<div class="a" style="left:838px;top:229px;width:1px;height:94px;background:#444"></div>
<div class="a" style="left:1040px;top:229px;width:1px;height:94px;background:#444"></div>
<div class="a" style="left:1139px;top:229px;width:1px;height:94px;background:#444"></div>
<div class="a" style="left:1319px;top:229px;width:1px;height:94px;background:#444"></div>
<div class="a" style="left:1379px;top:229px;width:1px;height:94px;background:#444"></div>
<div class="a" style="left:1444px;top:229px;width:1px;height:94px;background:#444"></div>
<!-- small separators -->
<div class="a" style="left:265px;top:270px;width:1px;height:23px;background:#484848"></div>
<div class="a" style="left:311px;top:270px;width:1px;height:23px;background:#484848"></div>
<div class="a" style="left:402px;top:270px;width:1px;height:23px;background:#484848"></div>
<div class="a" style="left:602px;top:235px;width:1px;height:62px;background:#484848"></div>
<div class="a" style="left:775px;top:270px;width:1px;height:23px;background:#484848"></div>
<!-- ==== clipboard ==== -->
<svg style="left:62px;top:232px" width="30" height="32" viewBox="0 0 30 32" fill="none">
<path d="M6.5 5.5H1.8V28.8H12.5" stroke="#e9a45c" stroke-width="2.4"/><path d="M15.5 5.5H20.2V12" stroke="#e9a45c" stroke-width="2.4"/>
<path d="M5.5 7V4.5H8.5L11 1L13.5 4.5H16.5V7" stroke="#d8d8d8" stroke-width="1.2" fill="#292929"/>
<rect x="13.5" y="13.5" width="14.5" height="18" rx="1" stroke="#e0e0e0" stroke-width="1.4" fill="#292929"/>
</svg>
<svg style="left:71px;top:289px" width="9" height="6" viewBox="0 0 9 6" fill="none" stroke="#d0d0d0" stroke-width="1.3"><path d="M1 1L4.5 4.5L8 1"/></svg>
<!-- scissors -->
<svg style="left:108px;top:231px" width="14" height="18" viewBox="0 0 14 18" fill="none">
<path d="M3 0.5L10 12.5M11 0.5L4 12.5" stroke="#d8d8d8" stroke-width="1.3"/>
<circle cx="3.3" cy="14.5" r="2.2" stroke="#4aa3dc" stroke-width="1.3"/><circle cx="10.7" cy="14.5" r="2.2" stroke="#4aa3dc" stroke-width="1.3"/>
</svg>
<!-- copy -->
<svg style="left:106px;top:259px" width="17" height="17" viewBox="0 0 17 17" fill="none" stroke="#d8d8d8" stroke-width="1.3">
<path d="M5 12.5H1.5V1H8V3"/><path d="M5.5 4.5H11.5L15.5 8.5V16H5.5Z" fill="#292929"/><path d="M8 10.5H13M8 13H13" stroke-width="1"/>
</svg>
<svg style="left:133px;top:264px" width="9" height="6" viewBox="0 0 9 6" fill="none" stroke="#d0d0d0" stroke-width="1.3"><path d="M1 1L4.5 4.5L8 1"/></svg>
<!-- format painter -->
<svg style="left:106px;top:285px" width="18" height="18" viewBox="0 0 18 18" fill="none">
<path d="M11 6.5L16 1.5" stroke="#d8d8d8" stroke-width="2.2" stroke-linecap="round"/>
<path d="M6 6L12 12L9.5 14L3.5 8.5Z" fill="#d8d8d8"/>
<path d="M3 9.5L8.5 15L5 17L0.8 12Z" fill="#e9a45c"/>
</svg>
<!-- dialog launchers -->
<svg style="left:148px;top:314px" width="8" height="8" viewBox="0 0 8 8" fill="none" stroke="#c8c8c8" stroke-width="1.1"><path d="M0.5 4V0.5H4"/><path d="M3 3L7.5 7.5M7.5 4V7.5H4"/></svg>
<svg style="left:441px;top:314px" width="8" height="8" viewBox="0 0 8 8" fill="none" stroke="#c8c8c8" stroke-width="1.1"><path d="M0.5 4V0.5H4"/><path d="M3 3L7.5 7.5M7.5 4V7.5H4"/></svg>
<svg style="left:654px;top:314px" width="8" height="8" viewBox="0 0 8 8" fill="none" stroke="#c8c8c8" stroke-width="1.1"><path d="M0.5 4V0.5H4"/><path d="M3 3L7.5 7.5M7.5 4V7.5H4"/></svg>
<svg style="left:826px;top:314px" width="8" height="8" viewBox="0 0 8 8" fill="none" stroke="#c8c8c8" stroke-width="1.1"><path d="M0.5 4V0.5H4"/><path d="M3 3L7.5 7.5M7.5 4V7.5H4"/></svg>
<!-- ==== font ==== -->
<div class="a" style="left:167px;top:236px;width:179px;height:25px;background:#252525;border:1px solid #5a5a5a;border-radius:4px"></div>
<svg style="left:335px;top:246px" width="8" height="5" viewBox="0 0 8 5" fill="none" stroke="#d0d0d0" stroke-width="1.3"><path d="M1 0.8L4 4L7 0.8"/></svg>
<div class="a" style="left:349px;top:236px;width:42px;height:25px;background:#252525;border:1px solid #5a5a5a;border-radius:4px"></div>
<svg style="left:380px;top:246px" width="8" height="5" viewBox="0 0 8 5" fill="none" stroke="#d0d0d0" stroke-width="1.3"><path d="M1 0.8L4 4L7 0.8"/></svg>
<svg style="left:409px;top:239px" width="8" height="5" viewBox="0 0 8 5" fill="none" stroke="#4fb0a0" stroke-width="1.1"><path d="M1 4L4 1L7 4"/></svg>
<svg style="left:436px;top:240px" width="7" height="4" viewBox="0 0 8 5" fill="none" stroke="#4fb0a0" stroke-width="1.1"><path d="M1 1L4 4L7 1"/></svg>
<svg style="left:252px;top:279px" width="8" height="5" viewBox="0 0 8 5" fill="none" stroke="#d0d0d0" stroke-width="1.3"><path d="M1 0.8L4 4L7 0.8"/></svg>
<div class="a" style="left:230px;top:287.5px;width:10px;height:1.2px;background:#d0d0d0"></div>
<!-- borders icon -->
<svg style="left:273px;top:273px" width="16" height="16" viewBox="0 0 16 16" fill="none" stroke="#c8c8c8" stroke-width="1">
<path d="M0.5 0.5H15.5V15.5H0.5Z" stroke-dasharray="1.2 1.2"/><path d="M8 0.5V15.5M0.5 8H15.5" stroke-dasharray="1.2 1.2"/><path d="M0.5 15.5H15.5" stroke-width="1.4"/>
</svg>
<svg style="left:296px;top:279px" width="8" height="5" viewBox="0 0 8 5" fill="none" stroke="#d0d0d0" stroke-width="1.3"><path d="M1 0.8L4 4L7 0.8"/></svg>
<!-- fill color -->
<svg style="left:320px;top:272px" width="16" height="13" viewBox="0 0 16 13" fill="none" stroke="#d0d0d0" stroke-width="1.2">
<path d="M6.5 1L12 6.5L7 11.5L1.5 6Z"/><path d="M4.5 3L7.5 0.5"/><path d="M13.5 8C14.6 9.6 14.6 11 13.5 11C12.4 11 12.4 9.6 13.5 8Z" fill="#d0d0d0" stroke="none"/>
</svg>
<div class="a" style="left:319px;top:286px;width:17px;height:4px;background:#fff200"></div>
<svg style="left:342px;top:279px" width="8" height="5" viewBox="0 0 8 5" fill="none" stroke="#d0d0d0" stroke-width="1.3"><path d="M1 0.8L4 4L7 0.8"/></svg>
<!-- font color -->
<div class="a" style="left:360px;top:286px;width:20px;height:4px;background:#f01818"></div>
<svg style="left:386px;top:279px" width="8" height="5" viewBox="0 0 8 5" fill="none" stroke="#d0d0d0" stroke-width="1.3"><path d="M1 0.8L4 4L7 0.8"/></svg>
<!-- phonetic caret -->
<svg style="left:433px;top:279px" width="8" height="5" viewBox="0 0 8 5" fill="none" stroke="#d0d0d0" stroke-width="1.3"><path d="M1 0.8L4 4L7 0.8"/></svg>
<!-- ==== alignment ==== -->
<svg style="left:467px;top:239px" width="16" height="11" viewBox="0 0 16 11" stroke="#d0d0d0" stroke-width="1.2"><path d="M0 0.6H16M3 5H13M0 9.4H16" /></svg>
<div class="a" style="left:490px;top:236px;width:25px;height:25px;background:#333;border:1px solid #707070;border-radius:4px"></div>
<svg style="left:495px;top:243px" width="15" height="11" viewBox="0 0 15 11" stroke="#e0e0e0" stroke-width="1.2"><path d="M0 0.6H15M2.5 5.5H12.5M0 10.4H15" /></svg>
<svg style="left:521px;top:247px" width="16" height="11" viewBox="0 0 16 11" stroke="#d0d0d0" stroke-width="1.2"><path d="M0 0.6H16M3 5.5H13M0 10.4H16" /></svg>
<!-- orientation -->
<svg style="left:546px;top:239px" width="19" height="17" viewBox="0 0 19 17" fill="none"><path d="M4 16L17 4M17 4H12.5M17 4V8.5" stroke="#4aa3dc" stroke-width="1.3"/></svg>
<svg style="left:569px;top:246px" width="8" height="5" viewBox="0 0 8 5" fill="none" stroke="#d0d0d0" stroke-width="1.3"><path d="M1 0.8L4 4L7 0.8"/></svg>
<!-- wrap -->
<svg style="left:616px;top:247px" width="15" height="9" viewBox="0 0 15 9" fill="none" stroke="#4aa3dc" stroke-width="1.3"><path d="M11 0.5C14.5 1.5 14 6 9.5 6H5M7.5 3.5L5 6L7.5 8.5"/></svg>
<!-- align row 2 -->
<svg style="left:467px;top:274px" width="16" height="14" viewBox="0 0 16 14" stroke="#d0d0d0" stroke-width="1.2"><path d="M0 0.6H16M0 4.8H11M0 9H16M0 13.2H11"/></svg>
<svg style="left:494px;top:274px" width="16" height="14" viewBox="0 0 16 14" stroke="#d0d0d0" stroke-width="1.2"><path d="M0 0.6H16M3 4.8H13M0 9H16M3 13.2H13"/></svg>
<svg style="left:521px;top:274px" width="16" height="14" viewBox="0 0 16 14" stroke="#d0d0d0" stroke-width="1.2"><path d="M0 0.6H16M5 4.8H16M0 9H16M5 13.2H16"/></svg>
<svg style="left:547px;top:274px" width="17" height="14" viewBox="0 0 17 14" fill="none" stroke="#d0d0d0" stroke-width="1.2"><path d="M0 0.6H17M9 4.8H17M9 9H17M0 13.2H17"/><path d="M7 7H1M3.5 4.5L1 7L3.5 9.5" stroke="#4aa3dc"/></svg>
<svg style="left:574px;top:274px" width="17" height="14" viewBox="0 0 17 14" fill="none" stroke="#d0d0d0" stroke-width="1.2"><path d="M0 0.6H17M9 4.8H17M9 9H17M0 13.2H17"/><path d="M0.5 7H6.5M4 4.5L6.5 7L4 9.5" stroke="#4aa3dc"/></svg>
<!-- merge -->
<svg style="left:612px;top:273px" width="18" height="16" viewBox="0 0 18 16" fill="none" stroke="#d0d0d0" stroke-width="1.1">
<rect x="0.6" y="0.6" width="16.8" height="14.8"/><rect x="0.6" y="4" width="16.8" height="8" fill="#2f7fc0" stroke="#d0d0d0"/><path d="M6 0.6V4M12 0.6V4M6 12V15.4M12 12V15.4"/><path d="M3.5 8H14.5M5.5 6L3.5 8L5.5 10M12.5 6L14.5 8L12.5 10" stroke="#e8f4ff" stroke-width="1"/>
</svg>
<svg style="left:642px;top:279px" width="8" height="5" viewBox="0 0 8 5" fill="none" stroke="#d0d0d0" stroke-width="1.3"><path d="M1 0.8L4 4L7 0.8"/></svg>
<!-- ==== number ==== -->
<div class="a" style="left:676px;top:236px;width:154px;height:25px;background:#252525;border:1px solid #5a5a5a;border-radius:4px"></div>
<svg style="left:819px;top:246px" width="8" height="5" viewBox="0 0 8 5" fill="none" stroke="#d0d0d0" stroke-width="1.3"><path d="M1 0.8L4 4L7 0.8"/></svg>
<!-- currency -->
<svg style="left:680px;top:275px" width="18" height="15" viewBox="0 0 18 15" fill="none">
<rect x="0.6" y="0.6" width="14" height="9" stroke="#d0d0d0" stroke-width="1.1"/><circle cx="7.5" cy="5" r="2" stroke="#d0d0d0" stroke-width="1"/>
<rect x="9.5" y="5.5" width="8" height="9" rx="2" fill="#292929" stroke="#e8c36a" stroke-width="1.2"/><path d="M9.5 8.5H17.5M9.5 11.5H17.5" stroke="#e8c36a" stroke-width="1"/>
</svg>
<svg style="left:704px;top:279px" width="8" height="5" viewBox="0 0 8 5" fill="none" stroke="#d0d0d0" stroke-width="1.3"><path d="M1 0.8L4 4L7 0.8"/></svg>
<!-- decimals -->
<svg style="left:782px;top:274px" width="17" height="15" viewBox="0 0 17 15" fill="none"><path d="M7 3.5H1M3.3 1L1 3.5L3.3 6" stroke="#4aa3dc" stroke-width="1.2"/></svg>
<svg style="left:809px;top:274px" width="17" height="15" viewBox="0 0 17 15" fill="none"><path d="M0.5 11H6.5M4.2 8.5L6.5 11L4.2 13.5" stroke="#4aa3dc" stroke-width="1.2"/></svg>
<!-- ==== styles ==== -->
<!-- conditional formatting -->
<svg style="left:858px;top:236px" width="31" height="23" viewBox="0 0 31 23" fill="none">
<rect x="6" y="1" width="14" height="7" fill="#e02a2a"/><rect x="6" y="8" width="8" height="7" fill="#2f86d0"/><rect x="6" y="15" width="16" height="7" fill="#e02a2a"/>
<path d="M0.6 0.6H30.4V22.4H0.6ZM0.6 8H30.4M0.6 15H30.4M6 0.6V22.4M22 0.6V22.4M26 0.6V22.4" stroke="#d0d0d0" stroke-width="1"/>
</svg>
<svg style="left:884px;top:288px" width="8" height="5" viewBox="0 0 8 5" fill="none" stroke="#d0d0d0" stroke-width="1.3"><path d="M1 0.8L4 4L7 0.8"/></svg>
<!-- format as table -->
<svg style="left:923px;top:236px" width="32" height="28" viewBox="0 0 32 28" fill="none">
<rect x="10" y="8" width="18" height="14" fill="#2f86d0"/>
<path d="M0.6 0.6H28V22H0.6ZM0.6 8H28M0.6 15H28M10 0.6V22M19 0.6V22" stroke="#d0d0d0" stroke-width="1"/>
<path d="M30.5 6.5L19 20" stroke="#d8d8d8" stroke-width="2.4" stroke-linecap="round"/><path d="M19.5 18.5C16 18.5 15 22 10.5 26C15 27 20 25 21 20Z" fill="#4aa3dc"/>
</svg>
<svg style="left:960px;top:288px" width="8" height="5" viewBox="0 0 8 5" fill="none" stroke="#d0d0d0" stroke-width="1.3"><path d="M1 0.8L4 4L7 0.8"/></svg>
<!-- cell styles -->
<svg style="left:988px;top:236px" width="33" height="28" viewBox="0 0 33 28" fill="none">
<rect x="5" y="5" width="19" height="13" fill="#2f86d0"/>
<path d="M0.6 0.6H28V22H0.6ZM0.6 5H28M0.6 18H28M5 0.6V22M24 0.6V22" stroke="#d0d0d0" stroke-width="1"/>
<path d="M31.5 6.5L20 20" stroke="#d8d8d8" stroke-width="2.4" stroke-linecap="round"/><path d="M20.5 18.5C17 18.5 16 22 11.5 26C16 27 21 25 22 20Z" fill="#4aa3dc"/>
</svg>
<svg style="left:1020px;top:288.5px" width="8" height="5" viewBox="0 0 8 5" fill="none" stroke="#d0d0d0" stroke-width="1.3"><path d="M1 0.8L4 4L7 0.8"/></svg>
<!-- ==== cells ==== -->
<svg style="left:1053px;top:233px" width="16" height="14" viewBox="0 0 16 14" fill="none">
<rect x="5" y="4" width="10" height="5" fill="#2f86d0"/><path d="M0.6 0.6H15.4V13.4H0.6ZM0.6 4.5H15.4M0.6 9H15.4M5.5 0.6V13.4M10.5 0.6V13.4" stroke="#d0d0d0" stroke-width="1"/><path d="M8 6.8H1.5M3.8 4.5L1.5 6.8L3.8 9" stroke="#4aa3dc" stroke-width="1.2"/>
</svg>
<svg style="left:1053px;top:260px" width="16" height="14" viewBox="0 0 16 14" fill="none">
<path d="M0.6 0.6H15.4V13.4H0.6ZM0.6 4.5H15.4M0.6 9H15.4M5.5 0.6V4.5M10.5 0.6V4.5M5.5 9V13.4M10.5 9V13.4" stroke="#d0d0d0" stroke-width="1"/><rect x="4.5" y="4.5" width="5" height="4.5" fill="#2f86d0"/><path d="M10.5 4.5L15 9M15 4.5L10.5 9" stroke="#e02a2a" stroke-width="1.3"/>
</svg>
<svg style="left:1053px;top:287px" width="16" height="15" viewBox="0 0 16 15" fill="none">
<rect x="5" y="5" width="10.4" height="5" fill="#2f86d0"/><path d="M0.6 1.6H15.4V14.4H0.6ZM0.6 5.5H15.4M0.6 10H15.4M5.5 1.6V14.4" stroke="#d0d0d0" stroke-width="1"/><path d="M5 0.5H15.4" stroke="#4aa3dc" stroke-width="1"/>
</svg>
<svg style="left:1115px;top:237.5px" width="8" height="5" viewBox="0 0 8 5" fill="none" stroke="#d0d0d0" stroke-width="1.3"><path d="M1 0.8L4 4L7 0.8"/></svg>
<svg style="left:1115px;top:264.5px" width="8" height="5" viewBox="0 0 8 5" fill="none" stroke="#d0d0d0" stroke-width="1.3"><path d="M1 0.8L4 4L7 0.8"/></svg>
<svg style="left:1101.5px;top:292px" width="8" height="5" viewBox="0 0 8 5" fill="none" stroke="#d0d0d0" stroke-width="1.3"><path d="M1 0.8L4 4L7 0.8"/></svg>
<!-- ==== editing ==== -->
<svg style="left:1155px;top:232px" width="14" height="15" viewBox="0 0 14 15" fill="none" stroke="#d0d0d0" stroke-width="1.1"><path d="M13 3V0.8H1.2L7.5 7.5L1.2 14.2H13V12"/></svg>
<svg style="left:1182px;top:237.5px" width="8" height="5" viewBox="0 0 8 5" fill="none" stroke="#d0d0d0" stroke-width="1.3"><path d="M1 0.8L4 4L7 0.8"/></svg>
<svg style="left:1153px;top:260px" width="17" height="14" viewBox="0 0 17 14" fill="none"><rect x="0.6" y="0.6" width="15.8" height="12.8" stroke="#d0d0d0" stroke-width="1.1"/><path d="M0.6 3H16.4" stroke="#d0d0d0"/><path d="M8.5 4.5V10.5M6 8L8.5 10.5L11 8" stroke="#4aa3dc" stroke-width="1.3"/></svg>
<svg style="left:1175px;top:264.5px" width="8" height="5" viewBox="0 0 8 5" fill="none" stroke="#d0d0d0" stroke-width="1.3"><path d="M1 0.8L4 4L7 0.8"/></svg>
<svg style="left:1153px;top:285px" width="17" height="17" viewBox="0 0 17 17" fill="none"><g transform="rotate(-42 8.5 8.5)"><rect x="0.5" y="4" width="16" height="9" rx="1" stroke="#c46ad0" stroke-width="1.3"/><rect x="0.5" y="4" width="7" height="9" rx="1" fill="#b85ac8"/></g></svg>
<svg style="left:1175px;top:291px" width="8" height="5" viewBox="0 0 8 5" fill="none" stroke="#d0d0d0" stroke-width="1.3"><path d="M1 0.8L4 4L7 0.8"/></svg>
<!-- sort & filter -->
<svg style="left:1230px;top:239px" width="19" height="17" viewBox="0 0 19 17" fill="none" stroke="#d0d0d0" stroke-width="1.3"><path d="M1 1H18L11.5 8.5V15.5H7.5V8.5Z"/></svg>
<svg style="left:1252px;top:288.5px" width="8" height="5" viewBox="0 0 8 5" fill="none" stroke="#d0d0d0" stroke-width="1.3"><path d="M1 0.8L4 4L7 0.8"/></svg>
<!-- find & select -->
<svg style="left:1272px;top:233px" width="33" height="31" viewBox="0 0 33 31" fill="none" stroke="#c8c8c8" stroke-width="1.5"><circle cx="21" cy="11.5" r="10.2"/><path d="M13.5 19L1 30"/></svg>
<svg style="left:1299px;top:288.5px" width="8" height="5" viewBox="0 0 8 5" fill="none" stroke="#d0d0d0" stroke-width="1.3"><path d="M1 0.8L4 4L7 0.8"/></svg>
<!-- add-ins -->
<svg style="left:1334px;top:232px" width="31" height="31" viewBox="0 0 31 31" fill="none" stroke="#d0432c" stroke-width="1.3">
<rect x="0.7" y="0.7" width="29.6" height="29.6"/><rect x="4.5" y="4.5" width="9" height="9"/><rect x="17.5" y="4.5" width="9" height="9"/><rect x="4.5" y="17.5" width="9" height="9"/><rect x="17.5" y="17.5" width="9" height="9"/>
</svg>
<!-- copilot -->
<svg style="left:1395px;top:232px" width="33" height="31" viewBox="0 0 33 31">
<defs>
<linearGradient id="cpa" x1="0" y1="0" x2="0" y2="1"><stop offset="0" stop-color="#2a9af0"/><stop offset=".4" stop-color="#2ec8d8"/><stop offset=".72" stop-color="#86dc58"/><stop offset="1" stop-color="#f4c82c"/></linearGradient>
<linearGradient id="cpb" x1="0.2" y1="0" x2="0.8" y2="1"><stop offset="0" stop-color="#a070f4"/><stop offset=".5" stop-color="#e868b8"/><stop offset="1" stop-color="#f88a3a"/></linearGradient>
</defs>
<path d="M7 4C8.5 1.5 10.5 0.5 13 0.5H19.5C23 0.5 24.8 2.2 25.6 5L27 10H19L16.5 4.5Z" fill="#2f86e4"/>
<path d="M10.5 0.8C7.5 0.8 5.6 2.4 4.7 5.2L0.9 17C-0.2 20.8 1.8 23.5 5.4 23.5H9C12 23.5 13.8 22 14.7 19.2L18.6 6.5C19.5 3.5 18 0.8 15 0.8Z" fill="url(#cpa)"/>
<path d="M26 27C24.5 29.5 22.5 30.5 20 30.5H13.5C10 30.5 8.2 28.8 7.4 26L6.5 22.5H13L16.5 26.5Z" fill="#f47c48"/>
<path d="M22.5 30.2C25.5 30.2 27.4 28.6 28.3 25.8L32.1 14C33.2 10.2 31.2 7.5 27.6 7.5H24C21 7.5 19.2 9 18.3 11.8L14.4 24.5C13.5 27.5 15 30.2 18 30.2Z" fill="url(#cpb)"/>
</svg>
<!-- collapse -->
<svg style="left:1493px;top:310px" width="11" height="7" viewBox="0 0 11 7" fill="none" stroke="#d0d0d0" stroke-width="1.4"><path d="M1 1L5.5 5.5L10 1"/></svg>

<span class="t" style="left:52.7px;top:269.9px;font-size:12.5px;color:#f0f0f0;font-weight:500;font-feature-settings:'palt';transform:scaleX(0.8990);transform-origin:0 50%;">貼り付け</span>
<span class="t" style="left:62.0px;top:311.8px;font-size:12px;color:#f0f0f0;font-weight:500;font-feature-settings:'palt';transform:scaleX(0.8284);transform-origin:0 50%;">クリップボード</span>
<span class="t" style="left:170.8px;top:241.8px;font-size:12.5px;color:#f0f0f0;font-weight:500;font-feature-settings:'palt';transform:scaleX(0.8658);transform-origin:0 50%;">游ゴシック</span>
<span class="t" style="left:352.6px;top:241.8px;font-size:13px;color:#f0f0f0;font-weight:500;font-feature-settings:'palt';transform:scaleX(0.9333);transform-origin:0 50%;">11</span>
<span class="t" style="left:398.0px;top:237.0px;font-size:19px;color:#d8d8d8;font-weight:500;font-feature-settings:'palt';transform:scaleX(0.9064);transform-origin:0 50%;">A</span>
<span class="t" style="left:427.0px;top:239.5px;font-size:16px;color:#d8d8d8;font-weight:500;font-feature-settings:'palt';transform:scaleX(0.8902);transform-origin:0 50%;">A</span>
<span class="t" style="left:177.0px;top:274.0px;font-size:14px;color:#d8d8d8;font-weight:700;font-feature-settings:'palt';transform:scaleX(0.7901);transform-origin:0 50%;">B</span>
<span class="t" style="left:206.0px;top:273.8px;font-size:14.5px;color:#d8d8d8;font-weight:500;font-feature-settings:'palt';font-style:italic;font-family:'Liberation Serif',serif;transform:scaleX(1.2387);transform-origin:0 50%;">I</span>
<span class="t" style="left:230.8px;top:273.6px;font-size:13.5px;color:#d8d8d8;font-weight:500;font-feature-settings:'palt';transform:scaleX(0.9436);transform-origin:0 50%;">U</span>
<span class="t" style="left:364.0px;top:270.0px;font-size:17px;color:#d8d8d8;font-weight:500;font-feature-settings:'palt';transform:scaleX(1.1460);transform-origin:0 50%;">A</span>
<span class="t" style="left:415.5px;top:272.0px;font-size:7px;color:#d0d0d0;font-weight:500;font-feature-settings:'palt';transform:scaleX(0.9187);transform-origin:0 50%;">ア</span>
<span class="t" style="left:413.5px;top:279.5px;font-size:10px;color:#d0d0d0;font-weight:500;font-feature-settings:'palt';transform:scaleX(1.0000);transform-origin:0 50%;">亜</span>
<span class="t" style="left:280.4px;top:311.8px;font-size:12px;color:#f0f0f0;font-weight:500;font-feature-settings:'palt';transform:scaleX(0.8805);transform-origin:0 50%;">フォント</span>
<span class="t" style="left:546.5px;top:238.8px;font-size:10.5px;color:#d8d8d8;font-weight:500;font-feature-settings:'palt';transform:rotate(-38deg) scaleX(1.0267);transform-origin:50% 50%;">ab</span>
<span class="t" style="left:616.0px;top:237.8px;font-size:10.5px;color:#d8d8d8;font-weight:500;font-feature-settings:'palt';transform:scaleX(1.0267);transform-origin:0 50%;">ab</span>
<span class="t" style="left:616.0px;top:246.2px;font-size:10.5px;color:#d8d8d8;font-weight:500;font-feature-settings:'palt';transform:scaleX(0.9524);transform-origin:0 50%;">c</span>
<span class="t" style="left:539.2px;top:311.8px;font-size:12px;color:#f0f0f0;font-weight:500;font-feature-settings:'palt';transform:scaleX(1.0118);transform-origin:0 50%;">配置</span>
<span class="t" style="left:679.8px;top:241.8px;font-size:12.5px;color:#f0f0f0;font-weight:500;font-feature-settings:'palt';transform:scaleX(0.9674);transform-origin:0 50%;">標準</span>
<span class="t" style="left:724.0px;top:270.5px;font-size:21px;color:#d0d0d0;font-weight:500;font-feature-settings:'palt';transform:scaleX(0.8294);transform-origin:0 50%;">%</span>
<span class="t" style="left:755.5px;top:271.0px;font-size:38px;color:#d0d0d0;font-weight:700;font-feature-settings:'palt';font-family:'Liberation Serif',serif;transform:scaleX(0.7901);transform-origin:0 50%;">’</span>
<span class="t" style="left:793.0px;top:272.8px;font-size:8.5px;color:#d0d0d0;font-weight:500;font-feature-settings:'palt';transform:scaleX(1.1617);transform-origin:0 50%;">0</span>
<span class="t" style="left:785.0px;top:281.2px;font-size:8.5px;color:#d0d0d0;font-weight:500;font-feature-settings:'palt';transform:scaleX(1.1413);transform-origin:0 50%;">.00</span>
<span class="t" style="left:812.0px;top:272.8px;font-size:8.5px;color:#d0d0d0;font-weight:500;font-feature-settings:'palt';transform:scaleX(1.1413);transform-origin:0 50%;">.00</span>
<span class="t" style="left:820.0px;top:281.2px;font-size:8.5px;color:#d0d0d0;font-weight:500;font-feature-settings:'palt';transform:scaleX(1.1617);transform-origin:0 50%;">0</span>
<span class="t" style="left:732.0px;top:311.8px;font-size:12px;color:#f0f0f0;font-weight:500;font-feature-settings:'palt';transform:scaleX(1.0618);transform-origin:0 50%;">数値</span>
<span class="t" style="left:849.0px;top:269.8px;font-size:12.5px;color:#f0f0f0;font-weight:500;font-feature-settings:'palt';transform:scaleX(0.9559);transform-origin:0 50%;">条件付き</span>
<span class="t" style="left:855.0px;top:284.2px;font-size:12.5px;color:#f0f0f0;font-weight:500;font-feature-settings:'palt';transform:scaleX(0.9714);transform-origin:0 50%;">書式</span>
<span class="t" style="left:904.5px;top:269.8px;font-size:12.5px;color:#f0f0f0;font-weight:500;font-feature-settings:'palt';transform:scaleX(0.8267);transform-origin:0 50%;">テーブルとして</span>
<span class="t" style="left:906.2px;top:284.2px;font-size:12.5px;color:#f0f0f0;font-weight:500;font-feature-settings:'palt';transform:scaleX(0.9557);transform-origin:0 50%;">書式設定</span>
<span class="t" style="left:988.6px;top:269.8px;font-size:12.5px;color:#f0f0f0;font-weight:500;font-feature-settings:'palt';transform:scaleX(0.8722);transform-origin:0 50%;">セルの</span>
<span class="t" style="left:978.0px;top:284.8px;font-size:12.5px;color:#f0f0f0;font-weight:500;font-feature-settings:'palt';transform:scaleX(0.8354);transform-origin:0 50%;">スタイル</span>
<span class="t" style="left:920.5px;top:311.8px;font-size:12px;color:#f0f0f0;font-weight:500;font-feature-settings:'palt';transform:scaleX(0.8377);transform-origin:0 50%;">スタイル</span>
<span class="t" style="left:1073.0px;top:234.1px;font-size:12.5px;color:#f0f0f0;font-weight:500;font-feature-settings:'palt';transform:scaleX(0.9594);transform-origin:0 50%;">挿入</span>
<span class="t" style="left:1073.0px;top:261.1px;font-size:12.5px;color:#f0f0f0;font-weight:500;font-feature-settings:'palt';transform:scaleX(0.9594);transform-origin:0 50%;">削除</span>
<span class="t" style="left:1073.0px;top:288.2px;font-size:12.5px;color:#f0f0f0;font-weight:500;font-feature-settings:'palt';transform:scaleX(0.9594);transform-origin:0 50%;">書式</span>
<span class="t" style="left:1079.7px;top:311.8px;font-size:12px;color:#f0f0f0;font-weight:500;font-feature-settings:'palt';transform:scaleX(0.8739);transform-origin:0 50%;">セル</span>
<span class="t" style="left:1218.0px;top:233.0px;font-size:14px;color:#4aa3dc;font-weight:500;font-feature-settings:'palt';transform:scaleX(1.0702);transform-origin:0 50%;">A</span>
<span class="t" style="left:1218.5px;top:246.5px;font-size:14px;color:#d8d8d8;font-weight:500;font-feature-settings:'palt';transform:scaleX(1.1095);transform-origin:0 50%;">Z</span>
<span class="t" style="left:1206.2px;top:269.8px;font-size:12.5px;color:#f0f0f0;font-weight:500;font-feature-settings:'palt';transform:scaleX(0.8672);transform-origin:0 50%;">並べ替えと</span>
<span class="t" style="left:1203.7px;top:284.8px;font-size:12.5px;color:#f0f0f0;font-weight:500;font-feature-settings:'palt';transform:scaleX(0.7669);transform-origin:0 50%;">フィルター</span>
<span class="t" style="left:1217.0px;top:311.8px;font-size:12px;color:#f0f0f0;font-weight:500;font-feature-settings:'palt';transform:scaleX(1.0576);transform-origin:0 50%;">編集</span>
<span class="t" style="left:1271.2px;top:269.8px;font-size:12.5px;color:#f0f0f0;font-weight:500;font-feature-settings:'palt';transform:scaleX(0.9524);transform-origin:0 50%;">検索と</span>
<span class="t" style="left:1269.7px;top:284.2px;font-size:12.5px;color:#f0f0f0;font-weight:500;font-feature-settings:'palt';transform:scaleX(0.9714);transform-origin:0 50%;">選択</span>
<span class="t" style="left:1340.5px;top:269.8px;font-size:12.5px;color:#f0f0f0;font-weight:500;font-feature-settings:'palt';transform:scaleX(0.8122);transform-origin:0 50%;">アド</span>
<span class="t" style="left:1340.5px;top:284.2px;font-size:12.5px;color:#f0f0f0;font-weight:500;font-feature-settings:'palt';transform:scaleX(0.8136);transform-origin:0 50%;">イン</span>
<span class="t" style="left:1331.0px;top:311.8px;font-size:12px;color:#f0f0f0;font-weight:500;font-feature-settings:'palt';transform:scaleX(0.8638);transform-origin:0 50%;">アドイン</span>
<span class="t" style="left:1390.0px;top:269.0px;font-size:13px;color:#f0f0f0;font-weight:500;font-feature-settings:'palt';transform:scaleX(1.0428);transform-origin:0 50%;">Copilot</span>
<!-- sheet -->
<div class="a" style="left:30px;top:376px;width:1492px;height:484px;background:#0a0a0a"></div>
<div class="a" style="left:64px;top:400px;width:1436px;height:460px;background:#fdfdfd"></div>
<div class="a" style="left:64px;top:400px;width:1393px;height:26px;background:#8ed2ee"></div>
<div class="a" style="left:1457px;top:452px;width:43px;height:1px;background:#e4e4e4"></div>
<div class="a" style="left:1457px;top:478px;width:43px;height:1px;background:#e4e4e4"></div>
<div class="a" style="left:1457px;top:504px;width:43px;height:1px;background:#e4e4e4"></div>
<div class="a" style="left:1457px;top:530px;width:43px;height:1px;background:#e4e4e4"></div>
<div class="a" style="left:1457px;top:556px;width:43px;height:1px;background:#e4e4e4"></div>
<div class="a" style="left:1457px;top:582px;width:43px;height:1px;background:#e4e4e4"></div>
<div class="a" style="left:1457px;top:608px;width:43px;height:1px;background:#e4e4e4"></div>
<div class="a" style="left:1457px;top:634px;width:43px;height:1px;background:#e4e4e4"></div>
<div class="a" style="left:1457px;top:660px;width:43px;height:1px;background:#e4e4e4"></div>
<div class="a" style="left:1457px;top:686px;width:43px;height:1px;background:#e4e4e4"></div>
<div class="a" style="left:64px;top:712px;width:1436px;height:1px;background:#e4e4e4"></div>
<div class="a" style="left:64px;top:738px;width:1436px;height:1px;background:#e4e4e4"></div>
<div class="a" style="left:64px;top:764px;width:1436px;height:1px;background:#e4e4e4"></div>
<div class="a" style="left:64px;top:790px;width:1436px;height:1px;background:#e4e4e4"></div>
<div class="a" style="left:64px;top:816px;width:1436px;height:1px;background:#e4e4e4"></div>
<div class="a" style="left:64px;top:842px;width:1436px;height:1px;background:#e4e4e4"></div>
<div class="a" style="left:221px;top:686px;width:1px;height:174px;background:#e4e4e4"></div>
<div class="a" style="left:537px;top:686px;width:1px;height:174px;background:#e4e4e4"></div>
<div class="a" style="left:729px;top:686px;width:1px;height:174px;background:#e4e4e4"></div>
<div class="a" style="left:1045px;top:686px;width:1px;height:174px;background:#e4e4e4"></div>
<div class="a" style="left:1267px;top:686px;width:1px;height:174px;background:#e4e4e4"></div>
<div class="a" style="left:1457px;top:686px;width:1px;height:174px;background:#e4e4e4"></div>
<div class="a" style="left:1457px;top:400px;width:1px;height:460px;background:#e4e4e4"></div>
<div class="a" style="left:64px;top:426px;width:1394px;height:1px;background:#2c2c2c"></div>
<div class="a" style="left:64px;top:452px;width:1394px;height:1px;background:#2c2c2c"></div>
<div class="a" style="left:64px;top:478px;width:1394px;height:1px;background:#2c2c2c"></div>
<div class="a" style="left:64px;top:504px;width:1394px;height:1px;background:#2c2c2c"></div>
<div class="a" style="left:64px;top:530px;width:1394px;height:1px;background:#2c2c2c"></div>
<div class="a" style="left:64px;top:556px;width:1394px;height:1px;background:#2c2c2c"></div>
<div class="a" style="left:64px;top:582px;width:1394px;height:1px;background:#2c2c2c"></div>
<div class="a" style="left:64px;top:608px;width:1394px;height:1px;background:#2c2c2c"></div>
<div class="a" style="left:64px;top:634px;width:1394px;height:1px;background:#2c2c2c"></div>
<div class="a" style="left:64px;top:660px;width:1394px;height:1px;background:#2c2c2c"></div>
<div class="a" style="left:64px;top:686px;width:1394px;height:1px;background:#2c2c2c"></div>
<div class="a" style="left:221px;top:400px;width:1px;height:287px;background:#2c2c2c"></div>
<div class="a" style="left:537px;top:400px;width:1px;height:287px;background:#2c2c2c"></div>
<div class="a" style="left:729px;top:400px;width:1px;height:287px;background:#2c2c2c"></div>
<div class="a" style="left:1045px;top:400px;width:1px;height:287px;background:#2c2c2c"></div>
<div class="a" style="left:1267px;top:400px;width:1px;height:287px;background:#2c2c2c"></div>
<div class="a" style="left:1457px;top:400px;width:1px;height:287px;background:#2c2c2c"></div>
<div class="a" style="left:64px;top:376px;width:158px;height:23px;background:#727272"></div>
<div class="a" style="left:221px;top:378px;width:1px;height:20px;background:#3d3d3d"></div>
<div class="a" style="left:537px;top:378px;width:1px;height:20px;background:#3d3d3d"></div>
<div class="a" style="left:729px;top:378px;width:1px;height:20px;background:#3d3d3d"></div>
<div class="a" style="left:1045px;top:378px;width:1px;height:20px;background:#3d3d3d"></div>
<div class="a" style="left:1267px;top:378px;width:1px;height:20px;background:#3d3d3d"></div>
<div class="a" style="left:1457px;top:378px;width:1px;height:20px;background:#3d3d3d"></div>
<div class="a" style="left:30px;top:426px;width:34px;height:26px;background:#727272"></div>
<div class="a" style="left:30px;top:426px;width:34px;height:1px;background:#4a4633"></div>
<div class="a" style="left:30px;top:452px;width:34px;height:1px;background:#4a4633"></div>
<div class="a" style="left:30px;top:478px;width:34px;height:1px;background:#4a4633"></div>
<div class="a" style="left:30px;top:504px;width:34px;height:1px;background:#4a4633"></div>
<div class="a" style="left:30px;top:530px;width:34px;height:1px;background:#4a4633"></div>
<div class="a" style="left:30px;top:556px;width:34px;height:1px;background:#4a4633"></div>
<div class="a" style="left:30px;top:582px;width:34px;height:1px;background:#4a4633"></div>
<div class="a" style="left:30px;top:608px;width:34px;height:1px;background:#4a4633"></div>
<div class="a" style="left:30px;top:634px;width:34px;height:1px;background:#4a4633"></div>
<div class="a" style="left:30px;top:660px;width:34px;height:1px;background:#4a4633"></div>
<div class="a" style="left:30px;top:686px;width:34px;height:1px;background:#4a4633"></div>
<div class="a" style="left:30px;top:712px;width:34px;height:1px;background:#4a4633"></div>
<div class="a" style="left:30px;top:738px;width:34px;height:1px;background:#4a4633"></div>
<div class="a" style="left:30px;top:764px;width:34px;height:1px;background:#4a4633"></div>
<div class="a" style="left:30px;top:790px;width:34px;height:1px;background:#4a4633"></div>
<div class="a" style="left:30px;top:816px;width:34px;height:1px;background:#4a4633"></div>
<div class="a" style="left:30px;top:842px;width:34px;height:1px;background:#4a4633"></div>
<div class="a" style="left:30px;top:399px;width:34px;height:1px;background:#4a4633"></div>
<svg style="left:45px;top:381px" width="18" height="17"><path d="M17 0V16H0Z" fill="#7a7a7a"/></svg>
<div class="a" style="left:63px;top:425px;width:160px;height:28px;border:2px solid #2f7d5e"></div>
<div class="a" style="left:218px;top:448px;width:7px;height:7px;background:#2f7d5e;border:1px solid #fff"></div>
<div class="a" style="left:64px;top:398px;width:158px;height:2px;background:#3f7a62"></div>
<div class="a" style="left:62px;top:426px;width:2px;height:26px;background:#3f7a62"></div>
<div class="a" style="left:1500px;top:376px;width:22px;height:484px;background:#0a0a0a"></div>
<svg style="left:1506px;top:380px" width="10" height="8"><path d="M5 0L10 8H0Z" fill="#9a9a9a"/></svg>
<svg style="left:1506px;top:849px" width="10" height="8"><path d="M0 0H10L5 8Z" fill="#9a9a9a"/></svg>
<div class="a" style="left:1507px;top:393px;width:8px;height:375px;background:#8c8c90;border-radius:4px"></div>
<svg style="left:1036px;top:418px" width="17" height="17" viewBox="0 0 17 17"><path d="M6 1H11V6H16V11H11V16H6V11H1V6H6Z" fill="#fff" stroke="#222" stroke-width="1.2"/></svg>
<span class="t" style="left:136.5px;top:378.8px;font-size:12.5px;color:#e8e8e8;transform:scaleX(1.0787);transform-origin:0 50%;">A</span>
<span class="t" style="left:374.5px;top:378.8px;font-size:12.5px;color:#e8e8e8;transform:scaleX(1.0787);transform-origin:0 50%;">B</span>
<span class="t" style="left:627.5px;top:378.8px;font-size:12.5px;color:#e8e8e8;transform:scaleX(0.9965);transform-origin:0 50%;">C</span>
<span class="t" style="left:882.5px;top:378.8px;font-size:12.5px;color:#e8e8e8;transform:scaleX(0.9965);transform-origin:0 50%;">D</span>
<span class="t" style="left:1150.5px;top:378.8px;font-size:12.5px;color:#e8e8e8;transform:scaleX(1.0787);transform-origin:0 50%;">E</span>
<span class="t" style="left:1357.5px;top:378.8px;font-size:12.5px;color:#e8e8e8;transform:scaleX(1.1779);transform-origin:0 50%;">F</span>
<span class="t" style="left:1489.5px;top:378.8px;font-size:12.5px;color:#e8e8e8;transform:scaleX(0.9246);transform-origin:0 50%;">G</span>
<span class="t" style="left:43.0px;top:407.0px;font-size:13px;color:#e8e8e8;transform:scaleX(0.9676);transform-origin:0 50%;">1</span>
<span class="t" style="left:43.0px;top:433.0px;font-size:13px;color:#e8e8e8;transform:scaleX(0.9676);transform-origin:0 50%;">2</span>
<span class="t" style="left:43.0px;top:459.0px;font-size:13px;color:#e8e8e8;transform:scaleX(0.9676);transform-origin:0 50%;">3</span>
<span class="t" style="left:43.0px;top:485.0px;font-size:13px;color:#e8e8e8;transform:scaleX(0.9676);transform-origin:0 50%;">4</span>
<span class="t" style="left:43.0px;top:511.0px;font-size:13px;color:#e8e8e8;transform:scaleX(0.9676);transform-origin:0 50%;">5</span>
<span class="t" style="left:43.0px;top:537.0px;font-size:13px;color:#e8e8e8;transform:scaleX(0.9676);transform-origin:0 50%;">6</span>
<span class="t" style="left:43.0px;top:563.0px;font-size:13px;color:#e8e8e8;transform:scaleX(0.9676);transform-origin:0 50%;">7</span>
<span class="t" style="left:43.0px;top:589.0px;font-size:13px;color:#e8e8e8;transform:scaleX(0.9676);transform-origin:0 50%;">8</span>
<span class="t" style="left:43.0px;top:615.0px;font-size:13px;color:#e8e8e8;transform:scaleX(0.9676);transform-origin:0 50%;">9</span>
<span class="t" style="left:39.5px;top:641.0px;font-size:13px;color:#e8e8e8;transform:scaleX(0.9676);transform-origin:0 50%;">10</span>
<span class="t" style="left:39.5px;top:667.0px;font-size:13px;color:#e8e8e8;transform:scaleX(1.0370);transform-origin:0 50%;">11</span>
<span class="t" style="left:39.5px;top:693.0px;font-size:13px;color:#e8e8e8;transform:scaleX(0.9676);transform-origin:0 50%;">12</span>
<span class="t" style="left:39.5px;top:719.0px;font-size:13px;color:#e8e8e8;transform:scaleX(0.9676);transform-origin:0 50%;">13</span>
<span class="t" style="left:39.5px;top:745.0px;font-size:13px;color:#e8e8e8;transform:scaleX(0.9676);transform-origin:0 50%;">14</span>
<span class="t" style="left:39.5px;top:771.0px;font-size:13px;color:#e8e8e8;transform:scaleX(0.9676);transform-origin:0 50%;">15</span>
<span class="t" style="left:39.5px;top:797.0px;font-size:13px;color:#e8e8e8;transform:scaleX(0.9676);transform-origin:0 50%;">16</span>
<span class="t" style="left:39.5px;top:823.0px;font-size:13px;color:#e8e8e8;transform:scaleX(0.9676);transform-origin:0 50%;">17</span>
<span class="t" style="left:39.5px;top:849.0px;font-size:13px;color:#e8e8e8;transform:scaleX(0.9676);transform-origin:0 50%;">18</span>
<span class="t" style="left:67.0px;top:406.0px;font-size:15px;color:#525252;font-weight:300;transform:scaleX(1.0131);transform-origin:0 50%;">ファイル名</span>
<span class="t" style="left:224.0px;top:406.0px;font-size:15px;color:#525252;font-weight:300;transform:scaleX(0.9774);transform-origin:0 50%;">セリフ</span>
<span class="t" style="left:541.0px;top:406.0px;font-size:15px;color:#525252;font-weight:300;transform:scaleX(1.0713);transform-origin:0 50%;">目標ラウドネス(LUFS-M)</span>
<span class="t" style="left:732.0px;top:406.0px;font-size:15px;color:#525252;font-weight:300;transform:scaleX(1.0583);transform-origin:0 50%;">Wwiseサウンドパス</span>
<span class="t" style="left:1048.0px;top:406.0px;font-size:15px;color:#525252;font-weight:300;transform:scaleX(1.0285);transform-origin:0 50%;">Wwiseイベントパス</span>
<span class="t" style="left:1270.0px;top:406.0px;font-size:15px;color:#525252;font-weight:300;transform:scaleX(1.0456);transform-origin:0 50%;">Originalsサブフォルダ</span>
<span class="t" style="left:67.0px;top:432.0px;font-size:15px;color:#525252;font-weight:300;transform:scaleX(1.0198);transform-origin:0 50%;">AZ_vo_men_01</span>
<span class="t" style="left:224.0px;top:432.0px;font-size:15px;color:#525252;font-weight:300;transform:scaleX(1.0099);transform-origin:0 50%;">さぁ冒険の始まりだ！</span>
<span class="t" style="left:702.0px;top:432.0px;font-size:15px;color:#525252;font-weight:300;transform:scaleX(1.1066);transform-origin:0 50%;">-18</span>
<span class="t" style="left:732.0px;top:432.0px;font-size:15px;color:#525252;font-weight:300;transform:scaleX(1.0893);transform-origin:0 50%;">¥Actor-Mixer Hierarchy¥Voice¥men</span>
<span class="t" style="left:1048.0px;top:432.0px;font-size:15px;color:#525252;font-weight:300;transform:scaleX(1.0602);transform-origin:0 50%;">¥Events¥Voice¥men</span>
<span class="t" style="left:1270.0px;top:432.0px;font-size:15px;color:#525252;font-weight:300;transform:scaleX(1.0779);transform-origin:0 50%;">Voice¥men</span>
<span class="t" style="left:67.0px;top:458.0px;font-size:15px;color:#525252;font-weight:300;transform:scaleX(1.0198);transform-origin:0 50%;">AZ_vo_men_02</span>
<span class="t" style="left:224.0px;top:458.0px;font-size:15px;color:#525252;font-weight:300;transform:scaleX(1.0099);transform-origin:0 50%;">このボスを倒すしかない！</span>
<span class="t" style="left:702.0px;top:458.0px;font-size:15px;color:#525252;font-weight:300;transform:scaleX(1.1066);transform-origin:0 50%;">-18</span>
<span class="t" style="left:732.0px;top:458.0px;font-size:15px;color:#525252;font-weight:300;transform:scaleX(1.0893);transform-origin:0 50%;">¥Actor-Mixer Hierarchy¥Voice¥men</span>
<span class="t" style="left:1048.0px;top:458.0px;font-size:15px;color:#525252;font-weight:300;transform:scaleX(1.0602);transform-origin:0 50%;">¥Events¥Voice¥men</span>
<span class="t" style="left:1270.0px;top:458.0px;font-size:15px;color:#525252;font-weight:300;transform:scaleX(1.0779);transform-origin:0 50%;">Voice¥men</span>
<span class="t" style="left:67.0px;top:484.0px;font-size:15px;color:#525252;font-weight:300;transform:scaleX(1.0198);transform-origin:0 50%;">AZ_vo_men_03</span>
<span class="t" style="left:224.0px;top:484.0px;font-size:15px;color:#525252;font-weight:300;transform:scaleX(1.0135);transform-origin:0 50%;">仲間、困っているぞ　助けて！</span>
<span class="t" style="left:702.0px;top:484.0px;font-size:15px;color:#525252;font-weight:300;transform:scaleX(1.1066);transform-origin:0 50%;">-20</span>
<span class="t" style="left:732.0px;top:484.0px;font-size:15px;color:#525252;font-weight:300;transform:scaleX(1.0893);transform-origin:0 50%;">¥Actor-Mixer Hierarchy¥Voice¥men</span>
<span class="t" style="left:1048.0px;top:484.0px;font-size:15px;color:#525252;font-weight:300;transform:scaleX(1.0602);transform-origin:0 50%;">¥Events¥Voice¥men</span>
<span class="t" style="left:1270.0px;top:484.0px;font-size:15px;color:#525252;font-weight:300;transform:scaleX(1.0779);transform-origin:0 50%;">Voice¥men</span>
<span class="t" style="left:67.0px;top:510.0px;font-size:15px;color:#525252;font-weight:300;transform:scaleX(1.0198);transform-origin:0 50%;">AZ_vo_men_04</span>
<span class="t" style="left:224.0px;top:510.0px;font-size:15px;color:#525252;font-weight:300;transform:scaleX(1.0099);transform-origin:0 50%;">ここからが真の試練だ！</span>
<span class="t" style="left:702.0px;top:510.0px;font-size:15px;color:#525252;font-weight:300;transform:scaleX(1.1066);transform-origin:0 50%;">-20</span>
<span class="t" style="left:732.0px;top:510.0px;font-size:15px;color:#525252;font-weight:300;transform:scaleX(1.0893);transform-origin:0 50%;">¥Actor-Mixer Hierarchy¥Voice¥men</span>
<span class="t" style="left:1048.0px;top:510.0px;font-size:15px;color:#525252;font-weight:300;transform:scaleX(1.0602);transform-origin:0 50%;">¥Events¥Voice¥men</span>
<span class="t" style="left:1270.0px;top:510.0px;font-size:15px;color:#525252;font-weight:300;transform:scaleX(1.0779);transform-origin:0 50%;">Voice¥men</span>
<span class="t" style="left:67.0px;top:536.0px;font-size:15px;color:#525252;font-weight:300;transform:scaleX(1.0198);transform-origin:0 50%;">AZ_vo_men_05</span>
<span class="t" style="left:224.0px;top:536.0px;font-size:15px;color:#525252;font-weight:300;transform:scaleX(1.0162);transform-origin:0 50%;">敵はどこだ？待っているぞ！</span>
<span class="t" style="left:702.0px;top:536.0px;font-size:15px;color:#525252;font-weight:300;transform:scaleX(1.1066);transform-origin:0 50%;">-28</span>
<span class="t" style="left:732.0px;top:536.0px;font-size:15px;color:#525252;font-weight:300;transform:scaleX(1.0893);transform-origin:0 50%;">¥Actor-Mixer Hierarchy¥Voice¥men</span>
<span class="t" style="left:1048.0px;top:536.0px;font-size:15px;color:#525252;font-weight:300;transform:scaleX(1.0602);transform-origin:0 50%;">¥Events¥Voice¥men</span>
<span class="t" style="left:1270.0px;top:536.0px;font-size:15px;color:#525252;font-weight:300;transform:scaleX(1.0779);transform-origin:0 50%;">Voice¥men</span>
<span class="t" style="left:67.0px;top:562.0px;font-size:15px;color:#525252;font-weight:300;transform:scaleX(1.0394);transform-origin:0 50%;">AZ_vo_women_01</span>
<span class="t" style="left:224.0px;top:562.0px;font-size:15px;color:#525252;font-weight:300;transform:scaleX(1.0106);transform-origin:0 50%;">ボス撃破！新たなチャレンジだ！</span>
<span class="t" style="left:702.0px;top:562.0px;font-size:15px;color:#525252;font-weight:300;transform:scaleX(1.1066);transform-origin:0 50%;">-18</span>
<span class="t" style="left:732.0px;top:562.0px;font-size:15px;color:#525252;font-weight:300;transform:scaleX(1.0897);transform-origin:0 50%;">¥Actor-Mixer Hierarchy¥Voice¥women</span>
<span class="t" style="left:1048.0px;top:562.0px;font-size:15px;color:#525252;font-weight:300;transform:scaleX(1.0645);transform-origin:0 50%;">¥Events¥Voice¥women</span>
<span class="t" style="left:1270.0px;top:562.0px;font-size:15px;color:#525252;font-weight:300;transform:scaleX(1.0813);transform-origin:0 50%;">Voice¥women</span>
<span class="t" style="left:67.0px;top:588.0px;font-size:15px;color:#525252;font-weight:300;transform:scaleX(1.0394);transform-origin:0 50%;">AZ_vo_women_02</span>
<span class="t" style="left:224.0px;top:588.0px;font-size:15px;color:#525252;font-weight:300;transform:scaleX(1.0099);transform-origin:0 50%;">戦闘のテクニックを磨こう！</span>
<span class="t" style="left:702.0px;top:588.0px;font-size:15px;color:#525252;font-weight:300;transform:scaleX(1.1066);transform-origin:0 50%;">-18</span>
<span class="t" style="left:732.0px;top:588.0px;font-size:15px;color:#525252;font-weight:300;transform:scaleX(1.0897);transform-origin:0 50%;">¥Actor-Mixer Hierarchy¥Voice¥women</span>
<span class="t" style="left:1048.0px;top:588.0px;font-size:15px;color:#525252;font-weight:300;transform:scaleX(1.0645);transform-origin:0 50%;">¥Events¥Voice¥women</span>
<span class="t" style="left:1270.0px;top:588.0px;font-size:15px;color:#525252;font-weight:300;transform:scaleX(1.0813);transform-origin:0 50%;">Voice¥women</span>
<span class="t" style="left:67.0px;top:614.0px;font-size:15px;color:#525252;font-weight:300;transform:scaleX(1.0394);transform-origin:0 50%;">AZ_vo_women_03</span>
<span class="t" style="left:224.0px;top:614.0px;font-size:15px;color:#525252;font-weight:300;transform:scaleX(1.0099);transform-origin:0 50%;">クエストを受ける前に準備を整えよう！</span>
<span class="t" style="left:702.0px;top:614.0px;font-size:15px;color:#525252;font-weight:300;transform:scaleX(1.1066);transform-origin:0 50%;">-20</span>
<span class="t" style="left:732.0px;top:614.0px;font-size:15px;color:#525252;font-weight:300;transform:scaleX(1.0897);transform-origin:0 50%;">¥Actor-Mixer Hierarchy¥Voice¥women</span>
<span class="t" style="left:1048.0px;top:614.0px;font-size:15px;color:#525252;font-weight:300;transform:scaleX(1.0645);transform-origin:0 50%;">¥Events¥Voice¥women</span>
<span class="t" style="left:1270.0px;top:614.0px;font-size:15px;color:#525252;font-weight:300;transform:scaleX(1.0813);transform-origin:0 50%;">Voice¥women</span>
<span class="t" style="left:67.0px;top:640.0px;font-size:15px;color:#525252;font-weight:300;transform:scaleX(1.0394);transform-origin:0 50%;">AZ_vo_women_04</span>
<span class="t" style="left:224.0px;top:640.0px;font-size:15px;color:#525252;font-weight:300;transform:scaleX(1.0099);transform-origin:0 50%;">ヒーローになるための道だ！</span>
<span class="t" style="left:702.0px;top:640.0px;font-size:15px;color:#525252;font-weight:300;transform:scaleX(1.1066);transform-origin:0 50%;">-20</span>
<span class="t" style="left:732.0px;top:640.0px;font-size:15px;color:#525252;font-weight:300;transform:scaleX(1.0897);transform-origin:0 50%;">¥Actor-Mixer Hierarchy¥Voice¥women</span>
<span class="t" style="left:1048.0px;top:640.0px;font-size:15px;color:#525252;font-weight:300;transform:scaleX(1.0645);transform-origin:0 50%;">¥Events¥Voice¥women</span>
<span class="t" style="left:1270.0px;top:640.0px;font-size:15px;color:#525252;font-weight:300;transform:scaleX(1.0813);transform-origin:0 50%;">Voice¥women</span>
<span class="t" style="left:67.0px;top:666.0px;font-size:15px;color:#525252;font-weight:300;transform:scaleX(1.0394);transform-origin:0 50%;">AZ_vo_women_05</span>
<span class="t" style="left:224.0px;top:666.0px;font-size:15px;color:#525252;font-weight:300;transform:scaleX(1.0143);transform-origin:0 50%;">このアビリティ、強力すぎる！</span>
<span class="t" style="left:702.0px;top:666.0px;font-size:15px;color:#525252;font-weight:300;transform:scaleX(1.1066);transform-origin:0 50%;">-28</span>
<span class="t" style="left:732.0px;top:666.0px;font-size:15px;color:#525252;font-weight:300;transform:scaleX(1.0897);transform-origin:0 50%;">¥Actor-Mixer Hierarchy¥Voice¥women</span>
<span class="t" style="left:1048.0px;top:666.0px;font-size:15px;color:#525252;font-weight:300;transform:scaleX(1.0645);transform-origin:0 50%;">¥Events¥Voice¥women</span>
<span class="t" style="left:1270.0px;top:666.0px;font-size:15px;color:#525252;font-weight:300;transform:scaleX(1.0813);transform-origin:0 50%;">Voice¥women</span>
<!-- tab bar -->
<div class="a" style="left:30px;top:860px;width:1492px;height:33px;background:#0a0a0a"></div>
<div class="a" style="left:150px;top:860px;width:62px;height:29px;background:#fdfdfd;border-radius:0 0 6px 6px"></div>
<svg style="left:144px;top:860px" width="6" height="6" viewBox="0 0 6 6"><path d="M0 0H6V6C6 2.5 3.5 0 0 0Z" fill="#fdfdfd"/></svg>
<svg style="left:212px;top:860px" width="6" height="6" viewBox="0 0 6 6"><path d="M6 0H0V6C0 2.5 2.5 0 6 0Z" fill="#fdfdfd"/></svg>
<div class="a" style="left:158.5px;top:883.5px;width:44px;height:2px;background:#2f7d5e"></div>
<svg style="left:59px;top:871px" width="7" height="11" viewBox="0 0 7 11" fill="none" stroke="#8a8a8a" stroke-width="1.4"><path d="M6 1L1.2 5.5L6 10"/></svg>
<svg style="left:93.5px;top:871px" width="7" height="11" viewBox="0 0 7 11" fill="none" stroke="#8a8a8a" stroke-width="1.4"><path d="M1 1L5.8 5.5L1 10"/></svg>
<div class="a" style="left:214.5px;top:869px;width:1px;height:16px;background:#555"></div>
<div class="a" style="left:260px;top:875.5px;width:10px;height:1.4px;background:#d0d0d0"></div>
<div class="a" style="left:927px;top:872px;width:2px;height:2px;background:#cfcfcf;box-shadow:0 4.5px 0 #cfcfcf,0 9px 0 #cfcfcf"></div>
<svg style="left:949.5px;top:871.5px" width="8" height="10" viewBox="0 0 8 10"><path d="M8 0V10L0 5Z" fill="#a0a0a0"/></svg>
<svg style="left:1489.5px;top:871.5px" width="8" height="10" viewBox="0 0 8 10"><path d="M0 0V10L8 5Z" fill="#a0a0a0"/></svg>
<div class="a" style="left:962px;top:870.5px;width:459px;height:11px;background:#9c9c9e;border-radius:5.5px"></div>
<!-- status bar -->
<div class="a" style="left:30px;top:893px;width:1492px;height:23px;background:#181818"></div>
<div class="a" style="left:30px;top:892.5px;width:1492px;height:1px;background:#303030"></div>
<!-- accessibility icon -->
<svg style="left:112px;top:897px" width="15" height="16" viewBox="0 0 15 16" fill="none" stroke="#e0e0e0" stroke-width="1.2">
<circle cx="6.5" cy="2.3" r="1.7"/><path d="M1 6C4 5 9 5 12 6"/><path d="M6.5 5.5V10L3.5 15M6.5 10L8 12"/><path d="M8.5 12.5L10.5 14.5L14.5 9.5"/>
</svg>
<!-- view buttons -->
<div class="a" style="left:1190px;top:894px;width:41px;height:21px;background:#2c2c2c"></div>
<svg style="left:1203px;top:898px" width="13" height="13" viewBox="0 0 13 13" fill="none" stroke="#e8e8e8" stroke-width="1.1"><path d="M0.6 0.6H12.4V12.4H0.6ZM0.6 4.5H12.4M0.6 8.5H12.4M4.5 0.6V12.4M8.5 0.6V12.4"/></svg>
<svg style="left:1244.5px;top:898px" width="14" height="13" viewBox="0 0 14 13" fill="none" stroke="#e0e0e0" stroke-width="1.1"><rect x="0.6" y="0.6" width="12.8" height="11.8"/><rect x="3.5" y="3" width="7" height="7"/><path d="M5 5.5H9M5 7.5H9" stroke-width=".9"/></svg>
<svg style="left:1286.5px;top:898px" width="14" height="13" viewBox="0 0 14 13" fill="none" stroke="#e0e0e0" stroke-width="1.1"><path d="M0.6 0.6H13.4V12.4H0.6Z"/><path d="M4.5 0.6V7H9.5V0.6M0.6 7H13.4"/></svg>
<!-- zoom -->
<div class="a" style="left:1322px;top:904px;width:7px;height:1.2px;background:#d8d8d8"></div>
<div class="a" style="left:1335px;top:904.2px;width:105px;height:1px;background:#8a8a8a"></div>
<div class="a" style="left:1385px;top:899px;width:5px;height:12px;background:#c4c4c4;border-radius:1px"></div>
<div class="a" style="left:1445px;top:904px;width:7.5px;height:1.2px;background:#d8d8d8"></div>
<div class="a" style="left:1448.2px;top:900.7px;width:1.2px;height:7.5px;background:#d8d8d8"></div>

<span class="t" style="left:160.3px;top:866.8px;font-size:15.5px;color:#5a5a5a;transform:scaleX(1.0878);transform-origin:0 50%;">script</span>
<span class="t" style="left:40.4px;top:899.3px;font-size:12px;color:#f0f0f0;transform:scaleX(1.0080);transform-origin:0 50%;">準備完了</span>
<span class="t" style="left:131.7px;top:899.3px;font-size:12px;color:#f0f0f0;font-feature-settings:'palt';transform:scaleX(0.8997);transform-origin:0 50%;">アクセシビリティ: 問題ありません</span>
<span class="t" style="left:1467.5px;top:898.8px;font-size:12.5px;color:#f0f0f0;transform:scaleX(1.0661);transform-origin:0 50%;">100%</span>
</div></div>
</body>
</html>
